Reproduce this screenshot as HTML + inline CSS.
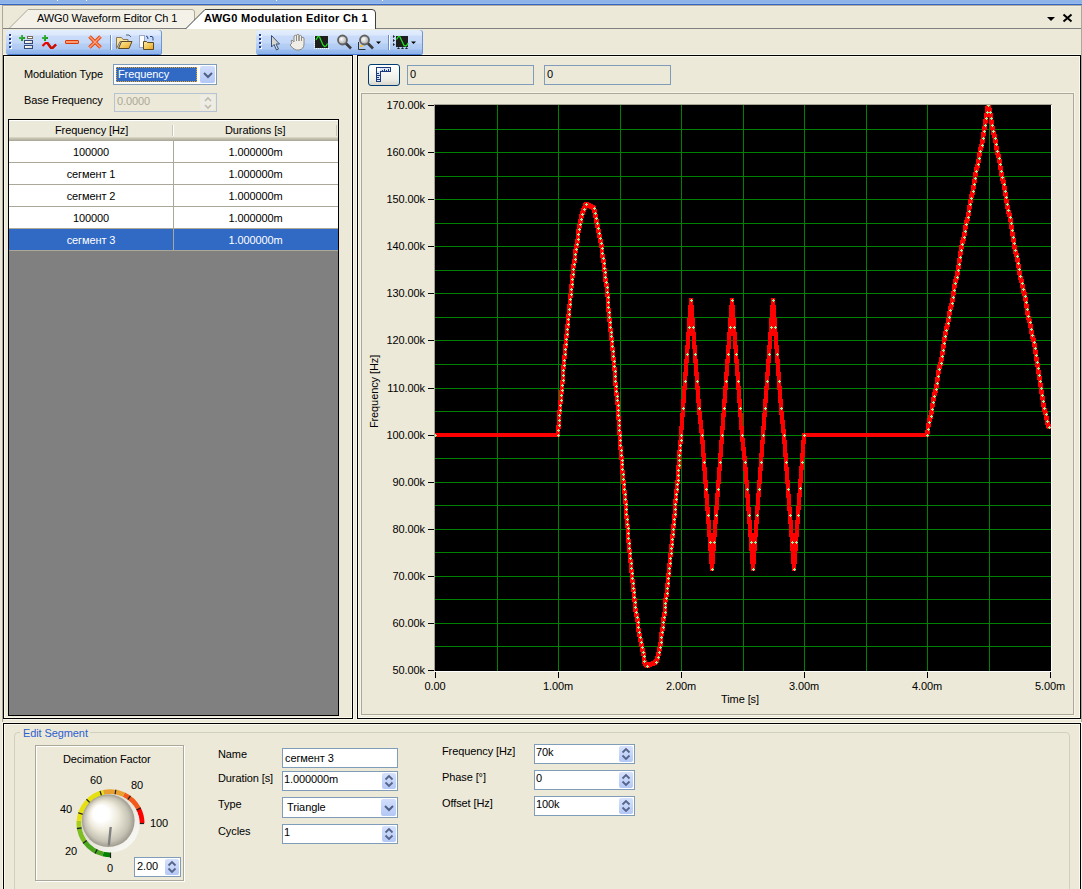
<!DOCTYPE html>
<html><head><meta charset="utf-8"><style>
html,body{margin:0;padding:0}
body{width:1082px;height:889px;overflow:hidden;position:relative;background:#ECE9D8;font-family:"Liberation Sans",sans-serif;font-size:11px;color:#000}
.t{position:absolute;white-space:nowrap;line-height:13px;letter-spacing:-0.1px;margin-left:-1px}
</style></head><body>
<div style="position:absolute;left:0px;top:0px;width:1082px;height:3px;background:#8EB3E8"></div><div style="position:absolute;left:0px;top:3px;width:1082px;height:1px;background:#97B9EB"></div><div style="position:absolute;left:0px;top:4px;width:1082px;height:1px;background:#3366C6"></div><div style="position:absolute;left:3px;top:6px;width:1078px;height:1px;background:#F2F0E4"></div><div style="position:absolute;left:57px;top:0px;width:1px;height:1px;background:#FFFFF0"></div><div style="position:absolute;left:86px;top:0px;width:1px;height:1px;background:#FFFFF0"></div><div style="position:absolute;left:276px;top:0px;width:1px;height:1px;background:#FFFFF0"></div><div style="position:absolute;left:382px;top:0px;width:1px;height:1px;background:#FFFFF0"></div><div style="position:absolute;left:2px;top:5px;width:1080px;height:1px;background:#B0AB98"></div><div style="position:absolute;left:2px;top:5px;width:1px;height:884px;background:#ACA899"></div><div style="position:absolute;left:1081px;top:5px;width:1px;height:884px;background:#ACA899"></div><div style="position:absolute;left:3px;top:55px;width:350px;height:664px;box-sizing:border-box;border:1px solid #000;box-shadow:inset 0 0 0 1px #FBF8EC, 0 0 0 1px #F8F6EA"></div><div style="position:absolute;left:357px;top:55px;width:724px;height:664px;box-sizing:border-box;border:1px solid #000;box-shadow:inset 0 0 0 1px #FBF8EC, 0 0 0 1px #F8F6EA"></div><div style="position:absolute;left:1081px;top:5px;width:1px;height:884px;background:#ACA899"></div><div style="position:absolute;left:2px;top:5px;width:1px;height:884px;background:#ACA899"></div><div style="position:absolute;left:3px;top:723px;width:1078px;height:170px;box-sizing:border-box;border:1px solid #000;border-bottom:none;box-shadow:inset 0 0 0 1px #FBF8EC, 0 0 0 1px #F8F6EA"></div><svg width="1082" height="30" style="position:absolute;left:0;top:0">
<path d="M9 28.5 L28 9.5 H192 Q194.5 9.5 194.5 12 V28.5" fill="#F4F2E8" stroke="#ACA899" stroke-width="1"/>
<path d="M3 28.5 H186 M375 28.5 H1081" stroke="#808080" stroke-width="1" fill="none"/>
<path d="M185.5 29 L205 9.5 H372 Q375.5 9.5 375.5 13 V29" fill="#FFFFFF" stroke="#404040" stroke-width="1"/>
<path d="M1047 17 h8 l-4 4 z" fill="#000"/>
<path d="M1063.5 14.5 L1071.5 21.5 M1071.5 14.5 L1063.5 21.5" stroke="#000" stroke-width="2"/>
</svg><div class="t" style="left:38px;top:12px;">AWG0 Waveform Editor Ch 1</div><div class="t" style="left:205px;top:12px;font-weight:bold;letter-spacing:0.3px">AWG0 Modulation Editor Ch 1</div><div style="position:absolute;left:6px;top:30px;width:156px;height:25px;background:linear-gradient(to bottom,#E3EEFD 0px,#DCE9FC 5px,#CADCF9 6px,#C4D8F8 13px,#B6CFF5 14px,#AFCAF3 19px,#9BBDEE 20px,#8DB3EA 24px,#4A7CD4 24px);border-radius:3px 3px 3px 3px;box-shadow:inset -1px 0 0 #6A93D8"></div><div style="position:absolute;left:256px;top:30px;width:167px;height:25px;background:linear-gradient(to bottom,#E3EEFD 0px,#DCE9FC 5px,#CADCF9 6px,#C4D8F8 13px,#B6CFF5 14px,#AFCAF3 19px,#9BBDEE 20px,#8DB3EA 24px,#4A7CD4 24px);border-radius:3px 3px 3px 3px;box-shadow:inset -1px 0 0 #6A93D8"></div><div style="position:absolute;left:10px;top:35px;width:2px;height:2px;background:#FFFFFF"></div><div style="position:absolute;left:9px;top:34px;width:2px;height:2px;background:#1F3F8F"></div><div style="position:absolute;left:10px;top:39px;width:2px;height:2px;background:#FFFFFF"></div><div style="position:absolute;left:9px;top:38px;width:2px;height:2px;background:#1F3F8F"></div><div style="position:absolute;left:10px;top:43px;width:2px;height:2px;background:#FFFFFF"></div><div style="position:absolute;left:9px;top:42px;width:2px;height:2px;background:#1F3F8F"></div><div style="position:absolute;left:10px;top:47px;width:2px;height:2px;background:#FFFFFF"></div><div style="position:absolute;left:9px;top:46px;width:2px;height:2px;background:#1F3F8F"></div><div style="position:absolute;left:260px;top:35px;width:2px;height:2px;background:#FFFFFF"></div><div style="position:absolute;left:259px;top:34px;width:2px;height:2px;background:#1F3F8F"></div><div style="position:absolute;left:260px;top:39px;width:2px;height:2px;background:#FFFFFF"></div><div style="position:absolute;left:259px;top:38px;width:2px;height:2px;background:#1F3F8F"></div><div style="position:absolute;left:260px;top:43px;width:2px;height:2px;background:#FFFFFF"></div><div style="position:absolute;left:259px;top:42px;width:2px;height:2px;background:#1F3F8F"></div><div style="position:absolute;left:260px;top:47px;width:2px;height:2px;background:#FFFFFF"></div><div style="position:absolute;left:259px;top:46px;width:2px;height:2px;background:#1F3F8F"></div><svg width="430" height="60" style="position:absolute;left:0;top:0">
<!-- add list -->
<defs><linearGradient id="gp" x1="0" y1="0" x2="1" y2="1"><stop offset="0" stop-color="#5CC45C"/><stop offset="1" stop-color="#008A00"/></linearGradient>
<linearGradient id="bar" x1="0" y1="0" x2="1" y2="1"><stop offset="0" stop-color="#FFFFFF"/><stop offset="0.5" stop-color="#F4F0E0"/><stop offset="1" stop-color="#B8CCF0"/></linearGradient>
<radialGradient id="lens" cx="0.4" cy="0.4" r="0.6"><stop offset="0" stop-color="#FFFFFF"/><stop offset="1" stop-color="#A8A8A8"/></radialGradient>
<linearGradient id="fold" x1="0" y1="0" x2="1" y2="1"><stop offset="0" stop-color="#FCEAA8"/><stop offset="0.6" stop-color="#F2C450"/><stop offset="1" stop-color="#E8A020"/></linearGradient></defs>
<path d="M21 35h2v2h2v2h-2v2h-2v-2h-2v-2h2z" fill="url(#gp)"/>
<path d="M19 37h6v2h-6z M21 35h2v6h-2z" fill="url(#gp)"/>
<rect x="27.5" y="36.5" width="5" height="2" fill="#FFFFFF" stroke="#7A6E58"/>
<rect x="24.5" y="40.5" width="8" height="3" fill="url(#bar)" stroke="#34497A"/>
<rect x="24.5" y="45.5" width="8" height="3" fill="url(#bar)" stroke="#34497A"/>
<!-- add wave -->
<path d="M42 37h6v2h-6z M44 35h2v6h-2z" fill="url(#gp)"/>
<path d="M42.5 46 L45.5 43 L47.5 43 L51 48 L52.5 48 L56 44.5" stroke="#F00000" stroke-width="2.2" fill="none"/>
<path d="M47.5 43 L51 48 L52.5 48 L56 44.5" stroke="#C81000" stroke-width="2.2" fill="none"/>
<!-- minus -->
<rect x="65.5" y="40.5" width="13" height="3" rx="0.5" fill="#FF9A70" stroke="#D83A08"/>
<!-- X -->
<path d="M89.5 36.5 L100.5 47.5 M100.5 36.5 L89.5 47.5" stroke="#E84A10" stroke-width="3.6"/>
<path d="M89.5 36.5 L100.5 47.5 M100.5 36.5 L89.5 47.5" stroke="#FFA080" stroke-width="1.4"/>
<!-- sep -->
<rect x="110" y="35" width="1" height="15" fill="#6A8CCB"/><rect x="111" y="35" width="1" height="15" fill="#fff"/>
<!-- open folder -->
<path d="M116.5 37.5 h5 l1.5 2 h5 v2 h-8 l-3.5 7 z" fill="#FBE49A" stroke="#8A7A5A"/>
<path d="M118.5 48.5 l3 -7 h10.5 l-3 7 z" fill="url(#fold)" stroke="#5A4A2A"/>
<path d="M126 35 h3 l2 2" stroke="#52607A" fill="none"/>
<!-- save -->
<rect x="139.5" y="35.5" width="5" height="12" fill="#fff" stroke="#9AA8C8"/>
<path d="M143.5 41.5 h3 l1 1 h6 v7 h-10 z" fill="url(#fold)" stroke="#5A4A2A"/>
<path d="M146 36 q2 0 2 3 M150 36.5 h2 q1 0 1 2 v2" stroke="#24408A" fill="none"/>
<!-- arrow -->
<path d="M271.5 35.5 L271.5 47 L274 44.5 L276.5 50 L278.5 49 L276 44 L279.5 44 Z" fill="#D8D8D0" stroke="#38507A"/>
<!-- hand -->
<path d="M292 43 q-2 -3 0 -3 l2 2 v-6 q1.5 -1.5 2.5 0 v5 v-6 q1.5 -1.5 2.5 0 v6 v-5 q1.5 -1.5 2.5 0 v5 v-3 q1.5 -1.5 2.5 0 v6 q0 5 -5 6 h-3 q-3 -1 -6 -5 z" fill="#EFEDE6" stroke="#8A8A86"/>
<!-- chart icon -->
<rect x="315" y="36" width="13" height="12" fill="#1E1E1E"/>
<path d="M316 40 L318 36.5 L319.5 37 L323 45 L324.5 46.5 L326 46 L327.5 43.5" stroke="#22E022" stroke-width="1.3" fill="none"/>
<path d="M314.5 36 v12.5 h14.5" stroke="#fff" stroke-dasharray="1 1" fill="none"/>
<!-- magnifier 1 -->
<circle cx="342.5" cy="40" r="4.5" fill="url(#lens)" stroke="#626262" stroke-width="1.8"/>
<path d="M346 43.5 L351 48.5" stroke="#3C3C3C" stroke-width="2.6"/>
<!-- magnifier 2 -->
<circle cx="364.5" cy="40" r="4.5" fill="url(#lens)" stroke="#626262" stroke-width="1.8"/>
<path d="M368 43.5 L373 48.5" stroke="#3C3C3C" stroke-width="2.6"/>
<path d="M358.5 42 v7.5 h7" stroke="#303030" fill="none"/>
<rect x="360" y="45" width="3" height="2" fill="#F0C040"/>
<path d="M376 41.5 h5 l-2.5 2.5 z" fill="#000"/>
<!-- sep2 -->
<rect x="388" y="35" width="1" height="15" fill="#6A8CCB"/><rect x="389" y="35" width="1" height="15" fill="#fff"/>
<!-- chart icon 2 -->
<rect x="396" y="36" width="12" height="11" fill="#1E1E1E"/>
<path d="M396.5 39.5 L398.5 36.5 L400 37 L404 45.5 L405.5 46 L407 45 L408 43" stroke="#22E022" stroke-width="1.3" fill="none"/>
<path d="M393 35 l2 1.5 l-2 1.5z M393 39 l2 1.5 l-2 1.5z M393 43 l2 1.5 l-2 1.5z M397 49 l1.5 -2 l1.5 2z M401 49 l1.5 -2 l1.5 2z M405 49 l1.5 -2 l1.5 2z" fill="#202020"/>
<path d="M411 41.5 h5 l-2.5 2.5 z" fill="#000"/>
</svg><div class="t" style="left:25px;top:68px;">Modulation Type</div><div style="position:absolute;left:113px;top:64px;width:104px;height:21px;box-sizing:border-box;border:1px solid #7F9DB9;background:#fff"></div><div style="position:absolute;left:116px;top:67px;width:81px;height:15px;background:#316AC5;box-sizing:border-box;border:1px dotted #E8A020"></div><div class="t" style="left:119px;top:68px;color:#fff">Frequency</div><div style="position:absolute;left:200px;top:66px;width:15px;height:17px;background:linear-gradient(#D2DEFB,#B4C8F6);border-radius:2px"></div><svg width="12" height="8" style="position:absolute;left:202px;top:71px"><path d="M2 2 L6 6 L10 2" stroke="#4D6185" stroke-width="2" fill="none"/></svg><div class="t" style="left:25px;top:94px;">Base Frequency</div><div style="position:absolute;left:114px;top:93px;width:103px;height:19px;box-sizing:border-box;border:1px solid #B5C3D5;background:#ECE9D8"></div><div class="t" style="left:118px;top:95px;color:#ACA899">0.0000</div><div style="position:absolute;left:200px;top:95px;width:15px;height:15px;background:#EEEDE5;border-radius:2px"></div><svg width="12" height="16" style="position:absolute;left:202px;top:95px"><path d="M3 6 L6 3 L9 6 M3 10 L6 13 L9 10" stroke="#C0BCAC" stroke-width="1.6" fill="none"/></svg><div style="position:absolute;left:8px;top:119px;width:331px;height:597px;box-sizing:border-box;border:1px solid #000;background:#808080"></div><div style="position:absolute;left:9px;top:120px;width:329px;height:1px;background:#FFFFFF"></div><div style="position:absolute;left:9px;top:121px;width:329px;height:16px;background:#EBE9DA"></div><div style="position:absolute;left:9px;top:137px;width:329px;height:4px;background:linear-gradient(#DEDBCB,#C9C5B5,#B9B5A5,#A9A595)"></div><div style="position:absolute;left:172px;top:125px;width:1px;height:11px;background:#CBC7B8"></div><div style="position:absolute;left:173px;top:125px;width:1px;height:11px;background:#FFFFFF"></div><div style="position:absolute;left:336px;top:125px;width:1px;height:11px;background:#CBC7B8"></div><div class="t" style="left:56px;top:124px;">Frequency [Hz]</div><div class="t" style="left:226px;top:124px;">Durations [s]</div><div style="position:absolute;left:9px;top:141px;width:329px;height:21px;background:#FFFFFF"></div><div style="position:absolute;left:9px;top:162px;width:329px;height:1px;background:#ACA899"></div><div style="position:absolute;left:173px;top:141px;width:1px;height:21px;background:#ACA899"></div><div class="t" style="left:9px;width:164px;text-align:center;top:146px;color:#000;margin-left:0">100000</div><div class="t" style="left:174px;width:163px;text-align:center;top:146px;color:#000;margin-left:0">1.000000m</div><div style="position:absolute;left:9px;top:163px;width:329px;height:21px;background:#FFFFFF"></div><div style="position:absolute;left:9px;top:184px;width:329px;height:1px;background:#ACA899"></div><div style="position:absolute;left:173px;top:163px;width:1px;height:21px;background:#ACA899"></div><div class="t" style="left:9px;width:164px;text-align:center;top:168px;color:#000;margin-left:0">сегмент 1</div><div class="t" style="left:174px;width:163px;text-align:center;top:168px;color:#000;margin-left:0">1.000000m</div><div style="position:absolute;left:9px;top:185px;width:329px;height:21px;background:#FFFFFF"></div><div style="position:absolute;left:9px;top:206px;width:329px;height:1px;background:#ACA899"></div><div style="position:absolute;left:173px;top:185px;width:1px;height:21px;background:#ACA899"></div><div class="t" style="left:9px;width:164px;text-align:center;top:190px;color:#000;margin-left:0">сегмент 2</div><div class="t" style="left:174px;width:163px;text-align:center;top:190px;color:#000;margin-left:0">1.000000m</div><div style="position:absolute;left:9px;top:207px;width:329px;height:21px;background:#FFFFFF"></div><div style="position:absolute;left:9px;top:228px;width:329px;height:1px;background:#ACA899"></div><div style="position:absolute;left:173px;top:207px;width:1px;height:21px;background:#ACA899"></div><div class="t" style="left:9px;width:164px;text-align:center;top:212px;color:#000;margin-left:0">100000</div><div class="t" style="left:174px;width:163px;text-align:center;top:212px;color:#000;margin-left:0">1.000000m</div><div style="position:absolute;left:9px;top:229px;width:329px;height:21px;background:#316AC5"></div><div style="position:absolute;left:9px;top:250px;width:329px;height:1px;background:#ACA899"></div><div style="position:absolute;left:173px;top:229px;width:1px;height:21px;background:#ACA899"></div><div class="t" style="left:9px;width:164px;text-align:center;top:234px;color:#FFFFFF;margin-left:0">сегмент 3</div><div class="t" style="left:174px;width:163px;text-align:center;top:234px;color:#FFFFFF;margin-left:0">1.000000m</div><div style="position:absolute;left:368px;top:64px;width:32px;height:22px;box-sizing:border-box;border:1px solid #003C74;border-radius:3px;background:linear-gradient(#FFFFFF,#F0F0EA 70%,#D8D6CC)"></div><svg width="16" height="16" style="position:absolute;left:376px;top:67px" shape-rendering="crispEdges">
<path d="M0.5 0.5 h14 v4 h-10 v10 h-4 z" fill="#DCE6F8" stroke="#1C3A7A"/>
<rect x="1" y="1" width="3" height="3" fill="#fff"/>
<path d="M6.5 3v1.5M8.5 2v2.5M10.5 3v1.5M12.5 2v2.5M1 6.5h1.5M1 8.5h2.5M1 10.5h1.5M1 12.5h2.5" stroke="#1C3A7A"/>
</svg><div style="position:absolute;left:407px;top:65px;width:127px;height:20px;box-sizing:border-box;border:1px solid #7F9DB9;background:#ECE9D8"></div><div style="position:absolute;left:544px;top:65px;width:127px;height:20px;box-sizing:border-box;border:1px solid #7F9DB9;background:#ECE9D8"></div><div class="t" style="left:411px;top:68px;">0</div><div class="t" style="left:548px;top:68px;">0</div><div style="position:absolute;left:361px;top:93px;width:713px;height:622px;box-sizing:border-box;border:1px solid #ACA899;box-shadow:0 0 0 1px #F6F4E8"></div><svg width="617" height="567" style="position:absolute;left:435px;top:105px" shape-rendering="crispEdges">
<rect x="0" y="0" width="616" height="566" fill="#000"/>
<rect x="616" y="0" width="1" height="567" fill="#fff"/>
<rect x="0" y="566" width="617" height="1" fill="#fff"/>
<rect x="62" y="0" width="1" height="566" fill="#008000"/>
<rect x="123" y="0" width="1" height="566" fill="#008000"/>
<rect x="185" y="0" width="1" height="566" fill="#008000"/>
<rect x="246" y="0" width="1" height="566" fill="#008000"/>
<rect x="308" y="0" width="1" height="566" fill="#008000"/>
<rect x="369" y="0" width="1" height="566" fill="#008000"/>
<rect x="431" y="0" width="1" height="566" fill="#008000"/>
<rect x="492" y="0" width="1" height="566" fill="#008000"/>
<rect x="554" y="0" width="1" height="566" fill="#008000"/>
<rect x="0" y="24" width="616" height="1" fill="#008000"/>
<rect x="0" y="47" width="616" height="1" fill="#008000"/>
<rect x="0" y="71" width="616" height="1" fill="#008000"/>
<rect x="0" y="94" width="616" height="1" fill="#008000"/>
<rect x="0" y="118" width="616" height="1" fill="#008000"/>
<rect x="0" y="141" width="616" height="1" fill="#008000"/>
<rect x="0" y="165" width="616" height="1" fill="#008000"/>
<rect x="0" y="188" width="616" height="1" fill="#008000"/>
<rect x="0" y="212" width="616" height="1" fill="#008000"/>
<rect x="0" y="235" width="616" height="1" fill="#008000"/>
<rect x="0" y="259" width="616" height="1" fill="#008000"/>
<rect x="0" y="283" width="616" height="1" fill="#008000"/>
<rect x="0" y="306" width="616" height="1" fill="#008000"/>
<rect x="0" y="330" width="616" height="1" fill="#008000"/>
<rect x="0" y="353" width="616" height="1" fill="#008000"/>
<rect x="0" y="377" width="616" height="1" fill="#008000"/>
<rect x="0" y="400" width="616" height="1" fill="#008000"/>
<rect x="0" y="424" width="616" height="1" fill="#008000"/>
<rect x="0" y="447" width="616" height="1" fill="#008000"/>
<rect x="0" y="471" width="616" height="1" fill="#008000"/>
<rect x="0" y="494" width="616" height="1" fill="#008000"/>
<rect x="0" y="518" width="616" height="1" fill="#008000"/>
<rect x="0" y="541" width="616" height="1" fill="#008000"/>
<path d="M-2,328L125,328L125,332L-2,332ZM121,323L125,323L125,332L121,332ZM121,323L122,318L126,318L126,322L125,327L121,327ZM122,313L126,313L126,322L122,322ZM122,308L126,308L126,317L122,317ZM122,308L123,303L127,303L127,307L126,312L122,312ZM123,298L127,298L127,307L123,307ZM123,298L124,293L128,293L128,297L127,302L123,302ZM124,288L128,288L128,297L124,297ZM124,288L125,283L129,283L129,287L128,292L124,292ZM125,278L129,278L129,287L125,287ZM125,278L126,273L130,273L130,277L129,282L125,282ZM126,268L130,268L130,277L126,277ZM126,263L130,263L130,272L126,272ZM126,263L127,258L131,258L131,262L130,267L126,267ZM127,253L131,253L131,262L127,262ZM127,253L128,247L132,247L132,251L131,257L127,257ZM128,242L132,242L132,251L128,251ZM128,242L129,237L133,237L133,241L132,246L128,246ZM129,232L133,232L133,241L129,241ZM129,232L130,227L134,227L134,231L133,236L129,236ZM130,222L134,222L134,231L130,231ZM130,222L131,217L135,217L135,221L134,226L130,226ZM131,212L135,212L135,221L131,221ZM131,212L132,207L136,207L136,211L135,216L131,216ZM132,202L136,202L136,211L132,211ZM132,202L133,197L137,197L137,201L136,206L132,206ZM133,192L137,192L137,201L133,201ZM133,192L134,187L138,187L138,191L137,196L133,196ZM134,182L138,182L138,191L134,191ZM134,182L135,177L139,177L139,181L138,186L134,186ZM135,172L139,172L139,181L135,181ZM135,172L136,167L140,167L140,171L139,176L135,176ZM136,162L140,162L140,171L136,171ZM136,162L137,157L141,157L141,161L140,166L136,166ZM137,157L138,152L142,152L142,156L141,161L137,161ZM138,147L142,147L142,156L138,156ZM138,147L139,142L143,142L143,146L142,151L138,151ZM139,142L140,137L144,137L144,141L143,146L139,146ZM140,137L141,132L145,132L145,136L144,141L140,141ZM141,127L145,127L145,136L141,136ZM141,127L142,122L146,122L146,126L145,131L141,131ZM142,122L143,117L147,117L147,121L146,126L142,126ZM143,117L144,112L148,112L148,116L147,121L143,121ZM144,112L145,107L149,107L149,111L148,116L144,116ZM145,107L147,102L151,102L151,106L149,111L145,111ZM147,102L149,97L153,97L153,101L151,106L147,106ZM149,97L153,97L161,101L161,105L157,105L149,101ZM157,101L161,101L162,106L162,110L158,110L157,105ZM158,106L162,106L163,111L163,115L159,115L158,110ZM159,111L163,111L164,116L164,120L160,120L159,115ZM160,116L164,116L165,121L165,125L161,125L160,120ZM161,121L165,121L166,126L166,130L162,130L161,125ZM162,126L166,126L167,131L167,135L163,135L162,130ZM163,131L167,131L168,136L168,140L164,140L163,135ZM164,136L168,136L169,141L169,145L165,145L164,140ZM165,141L169,141L169,150L165,150ZM165,146L169,146L170,151L170,155L166,155L165,150ZM166,151L170,151L171,156L171,160L167,160L166,155ZM167,156L171,156L171,165L167,165ZM167,161L171,161L172,165L172,169L168,169L167,165ZM168,165L172,165L172,174L168,174ZM168,170L172,170L173,175L173,179L169,179L168,174ZM169,175L173,175L174,180L174,184L170,184L169,179ZM170,180L174,180L174,189L170,189ZM170,185L174,185L175,190L175,194L171,194L170,189ZM171,190L175,190L175,199L171,199ZM171,195L175,195L175,204L171,204ZM171,200L175,200L176,205L176,209L172,209L171,204ZM172,205L176,205L176,214L172,214ZM172,210L176,210L177,215L177,219L173,219L172,214ZM173,215L177,215L177,224L173,224ZM173,220L177,220L178,225L178,229L174,229L173,224ZM174,225L178,225L178,233L174,233ZM174,229L178,229L179,234L179,238L175,238L174,233ZM175,234L179,234L179,243L175,243ZM175,239L179,239L180,244L180,248L176,248L175,243ZM176,244L180,244L180,253L176,253ZM176,249L180,249L181,254L181,258L177,258L176,253ZM177,254L181,254L181,263L177,263ZM177,259L181,259L182,264L182,268L178,268L177,263ZM178,264L182,264L182,273L178,273ZM178,269L182,269L182,278L178,278ZM178,274L182,274L183,279L183,283L179,283L178,278ZM179,279L183,279L183,288L179,288ZM179,284L183,284L184,289L184,293L180,293L179,288ZM180,289L184,289L184,297L180,297ZM180,293L184,293L185,298L185,302L181,302L180,297ZM181,298L185,298L185,307L181,307ZM181,303L185,303L185,312L181,312ZM181,308L185,308L186,313L186,317L182,317L181,312ZM182,313L186,313L186,322L182,322ZM182,318L186,318L186,327L182,327ZM182,323L186,323L187,328L187,332L183,332L182,327ZM183,328L187,328L187,337L183,337ZM183,333L187,333L187,342L183,342ZM183,338L187,338L188,343L188,347L184,347L183,342ZM184,343L188,343L188,352L184,352ZM184,348L188,348L189,353L189,357L185,357L184,352ZM185,353L189,353L189,361L185,361ZM185,357L189,357L189,366L185,366ZM185,362L189,362L190,367L190,371L186,371L185,366ZM186,367L190,367L190,376L186,376ZM186,372L190,372L191,377L191,381L187,381L186,376ZM187,377L191,377L191,386L187,386ZM187,382L191,382L192,387L192,391L188,391L187,386ZM188,387L192,387L192,396L188,396ZM188,392L192,392L193,397L193,401L189,401L188,396ZM189,397L193,397L193,406L189,406ZM189,402L193,402L193,411L189,411ZM189,407L193,407L194,412L194,416L190,416L189,411ZM190,412L194,412L194,421L190,421ZM190,417L194,417L195,421L195,425L191,425L190,421ZM191,421L195,421L195,430L191,430ZM191,426L195,426L195,435L191,435ZM191,431L195,431L196,436L196,440L192,440L191,435ZM192,436L196,436L196,445L192,445ZM192,441L196,441L197,446L197,450L193,450L192,445ZM193,446L197,446L197,455L193,455ZM193,451L197,451L198,456L198,460L194,460L193,455ZM194,456L198,456L198,465L194,465ZM194,461L198,461L199,466L199,470L195,470L194,465ZM195,466L199,466L199,475L195,475ZM195,471L199,471L200,476L200,480L196,480L195,475ZM196,476L200,476L200,485L196,485ZM196,481L200,481L201,485L201,489L197,489L196,485ZM197,485L201,485L201,494L197,494ZM197,490L201,490L202,495L202,499L198,499L197,494ZM198,495L202,495L202,504L198,504ZM198,500L202,500L203,505L203,509L199,509L198,504ZM199,505L203,505L204,510L204,514L200,514L199,509ZM200,510L204,510L205,515L205,519L201,519L200,514ZM201,515L205,515L205,524L201,524ZM201,520L205,520L206,525L206,529L202,529L201,524ZM202,525L206,525L207,530L207,534L203,534L202,529ZM203,530L207,530L208,535L208,539L204,539L203,534ZM204,535L208,535L209,540L209,544L205,544L204,539ZM205,540L209,540L210,545L210,549L206,549L205,544ZM206,545L210,545L211,549L211,553L207,553L206,549ZM207,549L211,549L211,558L207,558ZM207,554L211,554L214,559L214,563L210,563L207,558ZM210,559L219,555L223,555L223,559L214,563L210,563ZM219,555L221,550L225,550L225,554L223,559L219,559ZM221,550L222,545L226,545L226,549L225,554L221,554ZM222,545L223,540L227,540L227,544L226,549L222,549ZM223,540L224,535L228,535L228,539L227,544L223,544ZM224,530L228,530L228,539L224,539ZM224,530L225,525L229,525L229,529L228,534L224,534ZM225,525L226,520L230,520L230,524L229,529L225,529ZM226,515L230,515L230,524L226,524ZM226,515L227,510L231,510L231,514L230,519L226,519ZM227,510L228,505L232,505L232,509L231,514L227,514ZM228,500L232,500L232,509L228,509ZM228,496L232,496L232,504L228,504ZM228,496L229,491L233,491L233,495L232,500L228,500ZM229,491L230,486L234,486L234,490L233,495L229,495ZM230,481L234,481L234,490L230,490ZM230,481L231,476L235,476L235,480L234,485L230,485ZM231,471L235,471L235,480L231,480ZM231,471L232,466L236,466L236,470L235,475L231,475ZM232,461L236,461L236,470L232,470ZM232,461L233,456L237,456L237,460L236,465L232,465ZM233,451L237,451L237,460L233,460ZM233,451L234,446L238,446L238,450L237,455L233,455ZM234,441L238,441L238,450L234,450ZM234,441L235,437L239,437L239,441L238,445L234,445ZM235,432L239,432L239,441L235,441ZM235,432L236,427L240,427L240,431L239,436L235,436ZM236,422L240,422L240,431L236,431ZM236,422L237,417L241,417L241,421L240,426L236,426ZM237,412L241,412L241,421L237,421ZM237,412L238,407L242,407L242,411L241,416L237,416ZM238,402L242,402L242,411L238,411ZM238,397L242,397L242,406L238,406ZM238,397L239,392L243,392L243,396L242,401L238,401ZM239,387L243,387L243,396L239,396ZM239,387L240,382L244,382L244,386L243,391L239,391ZM240,377L244,377L244,386L240,386ZM240,377L241,373L245,373L245,377L244,381L240,381ZM241,368L245,368L245,377L241,377ZM241,363L245,363L245,372L241,372ZM241,363L242,358L246,358L246,362L245,367L241,367ZM242,353L246,353L246,362L242,362ZM242,348L246,348L246,357L242,357ZM242,348L243,343L247,343L247,347L246,352L242,352ZM243,338L247,338L247,347L243,347ZM243,338L244,333L248,333L248,337L247,342L243,342ZM244,328L248,328L248,337L244,337ZM244,328L246,301L250,301L250,305L248,332L244,332ZM246,301L248,274L252,274L252,278L250,305L246,305ZM248,274L250,247L254,247L254,251L252,278L248,278ZM250,247L252,220L256,220L256,224L254,251L250,251ZM252,220L254,193L258,193L258,197L256,224L252,224ZM254,193L258,193L260,220L260,224L256,224L254,197ZM256,220L260,220L262,247L262,251L258,251L256,224ZM258,247L262,247L264,274L264,278L260,278L258,251ZM260,274L264,274L266,301L266,305L262,305L260,278ZM262,301L266,301L269,328L269,332L265,332L262,305ZM265,328L269,328L271,355L271,359L267,359L265,332ZM267,355L271,355L273,382L273,386L269,386L267,359ZM269,382L273,382L275,408L275,412L271,412L269,386ZM271,408L275,408L277,435L277,439L273,439L271,412ZM273,435L277,435L279,462L279,466L275,466L273,439ZM275,462L277,435L281,435L281,439L279,466L275,466ZM277,435L279,408L283,408L283,412L281,439L277,439ZM279,408L281,382L285,382L285,386L283,412L279,412ZM281,382L283,355L287,355L287,359L285,386L281,386ZM283,355L285,328L289,328L289,332L287,359L283,359ZM285,328L287,301L291,301L291,305L289,332L285,332ZM287,301L289,274L293,274L293,278L291,305L287,305ZM289,274L291,247L295,247L295,251L293,278L289,278ZM291,247L293,220L297,220L297,224L295,251L291,251ZM293,220L295,193L299,193L299,197L297,224L293,224ZM295,193L299,193L301,220L301,224L297,224L295,197ZM297,220L301,220L303,247L303,251L299,251L297,224ZM299,247L303,247L305,274L305,278L301,278L299,251ZM301,274L305,274L307,301L307,305L303,305L301,278ZM303,301L307,301L309,328L309,332L305,332L303,305ZM305,328L309,328L312,355L312,359L308,359L305,332ZM308,355L312,355L314,382L314,386L310,386L308,359ZM310,382L314,382L316,408L316,412L312,412L310,386ZM312,408L316,408L318,435L318,439L314,439L312,412ZM314,435L318,435L320,462L320,466L316,466L314,439ZM316,462L318,435L322,435L322,439L320,466L316,466ZM318,435L320,408L324,408L324,412L322,439L318,439ZM320,408L322,382L326,382L326,386L324,412L320,412ZM322,382L324,355L328,355L328,359L326,386L322,386ZM324,355L326,328L330,328L330,332L328,359L324,359ZM326,328L328,301L332,301L332,305L330,332L326,332ZM328,301L330,274L334,274L334,278L332,305L328,305ZM330,274L332,247L336,247L336,251L334,278L330,278ZM332,247L334,220L338,220L338,224L336,251L332,251ZM334,220L336,193L340,193L340,197L338,224L334,224ZM336,193L340,193L342,220L342,224L338,224L336,197ZM338,220L342,220L344,247L344,251L340,251L338,224ZM340,247L344,247L346,274L346,278L342,278L340,251ZM342,274L346,274L348,301L348,305L344,305L342,278ZM344,301L348,301L351,328L351,332L347,332L344,305ZM347,328L351,328L353,355L353,359L349,359L347,332ZM349,355L353,355L355,382L355,386L351,386L349,359ZM351,382L355,382L357,408L357,412L353,412L351,386ZM353,408L357,408L359,435L359,439L355,439L353,412ZM355,435L359,435L361,462L361,466L357,466L355,439ZM357,462L359,435L363,435L363,439L361,466L357,466ZM359,435L361,408L365,408L365,412L363,439L359,439ZM361,408L363,381L367,381L367,385L365,412L361,412ZM363,381L365,355L369,355L369,359L367,385L363,385ZM365,355L367,328L371,328L371,332L369,359L365,359ZM367,328L494,328L494,332L367,332ZM490,328L491,322L495,322L495,326L494,332L490,332ZM491,322L492,315L496,315L496,319L495,326L491,326ZM492,315L494,309L498,309L498,313L496,319L492,319ZM494,309L495,302L499,302L499,306L498,313L494,313ZM495,302L496,295L500,295L500,299L499,306L495,306ZM496,295L497,289L501,289L501,293L500,299L496,299ZM497,289L499,282L503,282L503,286L501,293L497,293ZM499,282L500,276L504,276L504,280L503,286L499,286ZM500,276L501,269L505,269L505,273L504,280L500,280ZM501,269L502,262L506,262L506,266L505,273L501,273ZM502,262L504,256L508,256L508,260L506,266L502,266ZM504,256L505,249L509,249L509,253L508,260L504,260ZM505,249L506,243L510,243L510,247L509,253L505,253ZM506,243L507,236L511,236L511,240L510,247L506,247ZM507,236L508,229L512,229L512,233L511,240L507,240ZM508,229L509,223L513,223L513,227L512,233L508,233ZM509,223L511,216L515,216L515,220L513,227L509,227ZM511,216L512,210L516,210L516,214L515,220L511,220ZM512,210L513,203L517,203L517,207L516,214L512,214ZM513,203L515,196L519,196L519,200L517,207L513,207ZM515,196L516,190L520,190L520,194L519,200L515,200ZM516,190L517,183L521,183L521,187L520,194L516,194ZM517,183L518,176L522,176L522,180L521,187L517,187ZM518,176L520,170L524,170L524,174L522,180L518,180ZM520,170L521,163L525,163L525,167L524,174L520,174ZM521,163L522,157L526,157L526,161L525,167L521,167ZM522,157L523,150L527,150L527,154L526,161L522,161ZM523,150L524,143L528,143L528,147L527,154L523,154ZM524,143L525,137L529,137L529,141L528,147L524,147ZM525,137L527,130L531,130L531,134L529,141L525,141ZM527,130L528,124L532,124L532,128L531,134L527,134ZM528,124L529,117L533,117L533,121L532,128L528,128ZM529,117L531,110L535,110L535,114L533,121L529,121ZM531,110L532,104L536,104L536,108L535,114L531,114ZM532,104L533,97L537,97L537,101L536,108L532,108ZM533,97L534,91L538,91L538,95L537,101L533,101ZM534,91L536,84L540,84L540,88L538,95L534,95ZM536,84L537,77L541,77L541,81L540,88L536,88ZM537,77L538,71L542,71L542,75L541,81L537,81ZM538,71L539,64L543,64L543,68L542,75L538,75ZM539,64L541,57L545,57L545,61L543,68L539,68ZM541,57L542,51L546,51L546,55L545,61L541,61ZM542,51L543,44L547,44L547,48L546,55L542,55ZM543,44L545,38L549,38L549,42L547,48L543,48ZM545,38L546,31L550,31L550,35L549,42L545,42ZM546,31L547,24L551,24L551,28L550,35L546,35ZM547,24L548,18L552,18L552,22L551,28L547,28ZM548,18L549,11L553,11L553,15L552,22L548,22ZM549,11L550,5L554,5L554,9L553,15L549,15ZM550,5L551,-2L555,-2L555,2L554,9L550,9ZM551,-2L555,-2L557,5L557,9L553,9L551,2ZM553,5L557,5L558,11L558,15L554,15L553,9ZM554,11L558,11L559,18L559,22L555,22L554,15ZM555,18L559,18L560,24L560,28L556,28L555,22ZM556,24L560,24L562,31L562,35L558,35L556,28ZM558,31L562,31L563,37L563,41L559,41L558,35ZM559,37L563,37L564,44L564,48L560,48L559,41ZM560,44L564,44L566,51L566,55L562,55L560,48ZM562,51L566,51L567,57L567,61L563,61L562,55ZM563,57L567,57L568,64L568,68L564,68L563,61ZM564,64L568,64L569,70L569,74L565,74L564,68ZM565,70L569,70L571,77L571,81L567,81L565,74ZM567,77L571,77L572,84L572,88L568,88L567,81ZM568,84L572,84L573,90L573,94L569,94L568,88ZM569,90L573,90L574,97L574,101L570,101L569,94ZM570,97L574,97L575,103L575,107L571,107L570,101ZM571,103L575,103L577,110L577,114L573,114L571,107ZM573,110L577,110L578,116L578,120L574,120L573,114ZM574,116L578,116L579,123L579,127L575,127L574,120ZM575,123L579,123L580,130L580,134L576,134L575,127ZM576,130L580,130L581,136L581,140L577,140L576,134ZM577,136L581,136L582,143L582,147L578,147L577,140ZM578,143L582,143L584,149L584,153L580,153L578,147ZM580,149L584,149L585,156L585,160L581,160L580,153ZM581,156L585,156L586,162L586,166L582,166L581,160ZM582,162L586,162L587,169L587,173L583,173L582,166ZM583,169L587,169L589,176L589,180L585,180L583,173ZM585,176L589,176L590,182L590,186L586,186L585,180ZM586,182L590,182L592,189L592,193L588,193L586,186ZM588,189L592,189L593,195L593,199L589,199L588,193ZM589,195L593,195L594,202L594,206L590,206L589,199ZM590,202L594,202L595,209L595,213L591,213L590,206ZM591,209L595,209L597,215L597,219L593,219L591,213ZM593,215L597,215L598,222L598,226L594,226L593,219ZM594,222L598,222L599,228L599,232L595,232L594,226ZM595,228L599,228L601,235L601,239L597,239L595,232ZM597,235L601,235L602,241L602,245L598,245L597,239ZM598,241L602,241L603,248L603,252L599,252L598,245ZM599,248L603,248L604,255L604,259L600,259L599,252ZM600,255L604,255L605,261L605,265L601,265L600,259ZM601,261L605,261L606,268L606,272L602,272L601,265ZM602,268L606,268L607,274L607,278L603,278L602,272ZM603,274L607,274L608,281L608,285L604,285L603,278ZM604,281L608,281L609,288L609,292L605,292L604,285ZM605,288L609,288L610,294L610,298L606,298L605,292ZM606,294L610,294L611,301L611,305L607,305L606,298ZM607,301L611,301L613,307L613,311L609,311L607,305ZM609,307L613,307L614,314L614,318L610,318L609,311ZM610,314L614,314L616,320L616,324L612,324L610,318Z" fill="#ff0000" shape-rendering="crispEdges"/>
<rect x="-1" y="330" width="3" height="1" fill="#9EF09E"/><rect x="0" y="329" width="1" height="3" fill="#9EF09E"/>
<rect x="122" y="330" width="3" height="1" fill="#9EF09E"/><rect x="123" y="329" width="1" height="3" fill="#9EF09E"/>
<rect x="122" y="325" width="3" height="1" fill="#9EF09E"/><rect x="123" y="324" width="1" height="3" fill="#9EF09E"/>
<rect x="123" y="320" width="3" height="1" fill="#9EF09E"/><rect x="124" y="319" width="1" height="3" fill="#9EF09E"/>
<rect x="123" y="315" width="3" height="1" fill="#9EF09E"/><rect x="124" y="314" width="1" height="3" fill="#9EF09E"/>
<rect x="123" y="310" width="3" height="1" fill="#9EF09E"/><rect x="124" y="309" width="1" height="3" fill="#9EF09E"/>
<rect x="124" y="305" width="3" height="1" fill="#9EF09E"/><rect x="125" y="304" width="1" height="3" fill="#9EF09E"/>
<rect x="124" y="300" width="3" height="1" fill="#9EF09E"/><rect x="125" y="299" width="1" height="3" fill="#9EF09E"/>
<rect x="125" y="295" width="3" height="1" fill="#9EF09E"/><rect x="126" y="294" width="1" height="3" fill="#9EF09E"/>
<rect x="125" y="290" width="3" height="1" fill="#9EF09E"/><rect x="126" y="289" width="1" height="3" fill="#9EF09E"/>
<rect x="126" y="285" width="3" height="1" fill="#9EF09E"/><rect x="127" y="284" width="1" height="3" fill="#9EF09E"/>
<rect x="126" y="280" width="3" height="1" fill="#9EF09E"/><rect x="127" y="279" width="1" height="3" fill="#9EF09E"/>
<rect x="127" y="275" width="3" height="1" fill="#9EF09E"/><rect x="128" y="274" width="1" height="3" fill="#9EF09E"/>
<rect x="127" y="270" width="3" height="1" fill="#9EF09E"/><rect x="128" y="269" width="1" height="3" fill="#9EF09E"/>
<rect x="127" y="265" width="3" height="1" fill="#9EF09E"/><rect x="128" y="264" width="1" height="3" fill="#9EF09E"/>
<rect x="128" y="260" width="3" height="1" fill="#9EF09E"/><rect x="129" y="259" width="1" height="3" fill="#9EF09E"/>
<rect x="128" y="255" width="3" height="1" fill="#9EF09E"/><rect x="129" y="254" width="1" height="3" fill="#9EF09E"/>
<rect x="129" y="249" width="3" height="1" fill="#9EF09E"/><rect x="130" y="248" width="1" height="3" fill="#9EF09E"/>
<rect x="129" y="244" width="3" height="1" fill="#9EF09E"/><rect x="130" y="243" width="1" height="3" fill="#9EF09E"/>
<rect x="130" y="239" width="3" height="1" fill="#9EF09E"/><rect x="131" y="238" width="1" height="3" fill="#9EF09E"/>
<rect x="130" y="234" width="3" height="1" fill="#9EF09E"/><rect x="131" y="233" width="1" height="3" fill="#9EF09E"/>
<rect x="131" y="229" width="3" height="1" fill="#9EF09E"/><rect x="132" y="228" width="1" height="3" fill="#9EF09E"/>
<rect x="131" y="224" width="3" height="1" fill="#9EF09E"/><rect x="132" y="223" width="1" height="3" fill="#9EF09E"/>
<rect x="132" y="219" width="3" height="1" fill="#9EF09E"/><rect x="133" y="218" width="1" height="3" fill="#9EF09E"/>
<rect x="132" y="214" width="3" height="1" fill="#9EF09E"/><rect x="133" y="213" width="1" height="3" fill="#9EF09E"/>
<rect x="133" y="209" width="3" height="1" fill="#9EF09E"/><rect x="134" y="208" width="1" height="3" fill="#9EF09E"/>
<rect x="133" y="204" width="3" height="1" fill="#9EF09E"/><rect x="134" y="203" width="1" height="3" fill="#9EF09E"/>
<rect x="134" y="199" width="3" height="1" fill="#9EF09E"/><rect x="135" y="198" width="1" height="3" fill="#9EF09E"/>
<rect x="134" y="194" width="3" height="1" fill="#9EF09E"/><rect x="135" y="193" width="1" height="3" fill="#9EF09E"/>
<rect x="135" y="189" width="3" height="1" fill="#9EF09E"/><rect x="136" y="188" width="1" height="3" fill="#9EF09E"/>
<rect x="135" y="184" width="3" height="1" fill="#9EF09E"/><rect x="136" y="183" width="1" height="3" fill="#9EF09E"/>
<rect x="136" y="179" width="3" height="1" fill="#9EF09E"/><rect x="137" y="178" width="1" height="3" fill="#9EF09E"/>
<rect x="136" y="174" width="3" height="1" fill="#9EF09E"/><rect x="137" y="173" width="1" height="3" fill="#9EF09E"/>
<rect x="137" y="169" width="3" height="1" fill="#9EF09E"/><rect x="138" y="168" width="1" height="3" fill="#9EF09E"/>
<rect x="137" y="164" width="3" height="1" fill="#9EF09E"/><rect x="138" y="163" width="1" height="3" fill="#9EF09E"/>
<rect x="138" y="159" width="3" height="1" fill="#9EF09E"/><rect x="139" y="158" width="1" height="3" fill="#9EF09E"/>
<rect x="139" y="154" width="3" height="1" fill="#9EF09E"/><rect x="140" y="153" width="1" height="3" fill="#9EF09E"/>
<rect x="139" y="149" width="3" height="1" fill="#9EF09E"/><rect x="140" y="148" width="1" height="3" fill="#9EF09E"/>
<rect x="140" y="144" width="3" height="1" fill="#9EF09E"/><rect x="141" y="143" width="1" height="3" fill="#9EF09E"/>
<rect x="141" y="139" width="3" height="1" fill="#9EF09E"/><rect x="142" y="138" width="1" height="3" fill="#9EF09E"/>
<rect x="142" y="134" width="3" height="1" fill="#9EF09E"/><rect x="143" y="133" width="1" height="3" fill="#9EF09E"/>
<rect x="142" y="129" width="3" height="1" fill="#9EF09E"/><rect x="143" y="128" width="1" height="3" fill="#9EF09E"/>
<rect x="143" y="124" width="3" height="1" fill="#9EF09E"/><rect x="144" y="123" width="1" height="3" fill="#9EF09E"/>
<rect x="144" y="119" width="3" height="1" fill="#9EF09E"/><rect x="145" y="118" width="1" height="3" fill="#9EF09E"/>
<rect x="145" y="114" width="3" height="1" fill="#9EF09E"/><rect x="146" y="113" width="1" height="3" fill="#9EF09E"/>
<rect x="146" y="109" width="3" height="1" fill="#9EF09E"/><rect x="147" y="108" width="1" height="3" fill="#9EF09E"/>
<rect x="148" y="104" width="3" height="1" fill="#9EF09E"/><rect x="149" y="103" width="1" height="3" fill="#9EF09E"/>
<rect x="150" y="99" width="3" height="1" fill="#9EF09E"/><rect x="151" y="98" width="1" height="3" fill="#9EF09E"/>
<rect x="158" y="103" width="3" height="1" fill="#9EF09E"/><rect x="159" y="102" width="1" height="3" fill="#9EF09E"/>
<rect x="159" y="108" width="3" height="1" fill="#9EF09E"/><rect x="160" y="107" width="1" height="3" fill="#9EF09E"/>
<rect x="160" y="113" width="3" height="1" fill="#9EF09E"/><rect x="161" y="112" width="1" height="3" fill="#9EF09E"/>
<rect x="161" y="118" width="3" height="1" fill="#9EF09E"/><rect x="162" y="117" width="1" height="3" fill="#9EF09E"/>
<rect x="162" y="123" width="3" height="1" fill="#9EF09E"/><rect x="163" y="122" width="1" height="3" fill="#9EF09E"/>
<rect x="163" y="128" width="3" height="1" fill="#9EF09E"/><rect x="164" y="127" width="1" height="3" fill="#9EF09E"/>
<rect x="164" y="133" width="3" height="1" fill="#9EF09E"/><rect x="165" y="132" width="1" height="3" fill="#9EF09E"/>
<rect x="165" y="138" width="3" height="1" fill="#9EF09E"/><rect x="166" y="137" width="1" height="3" fill="#9EF09E"/>
<rect x="166" y="143" width="3" height="1" fill="#9EF09E"/><rect x="167" y="142" width="1" height="3" fill="#9EF09E"/>
<rect x="166" y="148" width="3" height="1" fill="#9EF09E"/><rect x="167" y="147" width="1" height="3" fill="#9EF09E"/>
<rect x="167" y="153" width="3" height="1" fill="#9EF09E"/><rect x="168" y="152" width="1" height="3" fill="#9EF09E"/>
<rect x="168" y="158" width="3" height="1" fill="#9EF09E"/><rect x="169" y="157" width="1" height="3" fill="#9EF09E"/>
<rect x="168" y="163" width="3" height="1" fill="#9EF09E"/><rect x="169" y="162" width="1" height="3" fill="#9EF09E"/>
<rect x="169" y="167" width="3" height="1" fill="#9EF09E"/><rect x="170" y="166" width="1" height="3" fill="#9EF09E"/>
<rect x="169" y="172" width="3" height="1" fill="#9EF09E"/><rect x="170" y="171" width="1" height="3" fill="#9EF09E"/>
<rect x="170" y="177" width="3" height="1" fill="#9EF09E"/><rect x="171" y="176" width="1" height="3" fill="#9EF09E"/>
<rect x="171" y="182" width="3" height="1" fill="#9EF09E"/><rect x="172" y="181" width="1" height="3" fill="#9EF09E"/>
<rect x="171" y="187" width="3" height="1" fill="#9EF09E"/><rect x="172" y="186" width="1" height="3" fill="#9EF09E"/>
<rect x="172" y="192" width="3" height="1" fill="#9EF09E"/><rect x="173" y="191" width="1" height="3" fill="#9EF09E"/>
<rect x="172" y="197" width="3" height="1" fill="#9EF09E"/><rect x="173" y="196" width="1" height="3" fill="#9EF09E"/>
<rect x="172" y="202" width="3" height="1" fill="#9EF09E"/><rect x="173" y="201" width="1" height="3" fill="#9EF09E"/>
<rect x="173" y="207" width="3" height="1" fill="#9EF09E"/><rect x="174" y="206" width="1" height="3" fill="#9EF09E"/>
<rect x="173" y="212" width="3" height="1" fill="#9EF09E"/><rect x="174" y="211" width="1" height="3" fill="#9EF09E"/>
<rect x="174" y="217" width="3" height="1" fill="#9EF09E"/><rect x="175" y="216" width="1" height="3" fill="#9EF09E"/>
<rect x="174" y="222" width="3" height="1" fill="#9EF09E"/><rect x="175" y="221" width="1" height="3" fill="#9EF09E"/>
<rect x="175" y="227" width="3" height="1" fill="#9EF09E"/><rect x="176" y="226" width="1" height="3" fill="#9EF09E"/>
<rect x="175" y="231" width="3" height="1" fill="#9EF09E"/><rect x="176" y="230" width="1" height="3" fill="#9EF09E"/>
<rect x="176" y="236" width="3" height="1" fill="#9EF09E"/><rect x="177" y="235" width="1" height="3" fill="#9EF09E"/>
<rect x="176" y="241" width="3" height="1" fill="#9EF09E"/><rect x="177" y="240" width="1" height="3" fill="#9EF09E"/>
<rect x="177" y="246" width="3" height="1" fill="#9EF09E"/><rect x="178" y="245" width="1" height="3" fill="#9EF09E"/>
<rect x="177" y="251" width="3" height="1" fill="#9EF09E"/><rect x="178" y="250" width="1" height="3" fill="#9EF09E"/>
<rect x="178" y="256" width="3" height="1" fill="#9EF09E"/><rect x="179" y="255" width="1" height="3" fill="#9EF09E"/>
<rect x="178" y="261" width="3" height="1" fill="#9EF09E"/><rect x="179" y="260" width="1" height="3" fill="#9EF09E"/>
<rect x="179" y="266" width="3" height="1" fill="#9EF09E"/><rect x="180" y="265" width="1" height="3" fill="#9EF09E"/>
<rect x="179" y="271" width="3" height="1" fill="#9EF09E"/><rect x="180" y="270" width="1" height="3" fill="#9EF09E"/>
<rect x="179" y="276" width="3" height="1" fill="#9EF09E"/><rect x="180" y="275" width="1" height="3" fill="#9EF09E"/>
<rect x="180" y="281" width="3" height="1" fill="#9EF09E"/><rect x="181" y="280" width="1" height="3" fill="#9EF09E"/>
<rect x="180" y="286" width="3" height="1" fill="#9EF09E"/><rect x="181" y="285" width="1" height="3" fill="#9EF09E"/>
<rect x="181" y="291" width="3" height="1" fill="#9EF09E"/><rect x="182" y="290" width="1" height="3" fill="#9EF09E"/>
<rect x="181" y="295" width="3" height="1" fill="#9EF09E"/><rect x="182" y="294" width="1" height="3" fill="#9EF09E"/>
<rect x="182" y="300" width="3" height="1" fill="#9EF09E"/><rect x="183" y="299" width="1" height="3" fill="#9EF09E"/>
<rect x="182" y="305" width="3" height="1" fill="#9EF09E"/><rect x="183" y="304" width="1" height="3" fill="#9EF09E"/>
<rect x="182" y="310" width="3" height="1" fill="#9EF09E"/><rect x="183" y="309" width="1" height="3" fill="#9EF09E"/>
<rect x="183" y="315" width="3" height="1" fill="#9EF09E"/><rect x="184" y="314" width="1" height="3" fill="#9EF09E"/>
<rect x="183" y="320" width="3" height="1" fill="#9EF09E"/><rect x="184" y="319" width="1" height="3" fill="#9EF09E"/>
<rect x="183" y="325" width="3" height="1" fill="#9EF09E"/><rect x="184" y="324" width="1" height="3" fill="#9EF09E"/>
<rect x="184" y="330" width="3" height="1" fill="#9EF09E"/><rect x="185" y="329" width="1" height="3" fill="#9EF09E"/>
<rect x="184" y="335" width="3" height="1" fill="#9EF09E"/><rect x="185" y="334" width="1" height="3" fill="#9EF09E"/>
<rect x="184" y="340" width="3" height="1" fill="#9EF09E"/><rect x="185" y="339" width="1" height="3" fill="#9EF09E"/>
<rect x="185" y="345" width="3" height="1" fill="#9EF09E"/><rect x="186" y="344" width="1" height="3" fill="#9EF09E"/>
<rect x="185" y="350" width="3" height="1" fill="#9EF09E"/><rect x="186" y="349" width="1" height="3" fill="#9EF09E"/>
<rect x="186" y="355" width="3" height="1" fill="#9EF09E"/><rect x="187" y="354" width="1" height="3" fill="#9EF09E"/>
<rect x="186" y="359" width="3" height="1" fill="#9EF09E"/><rect x="187" y="358" width="1" height="3" fill="#9EF09E"/>
<rect x="186" y="364" width="3" height="1" fill="#9EF09E"/><rect x="187" y="363" width="1" height="3" fill="#9EF09E"/>
<rect x="187" y="369" width="3" height="1" fill="#9EF09E"/><rect x="188" y="368" width="1" height="3" fill="#9EF09E"/>
<rect x="187" y="374" width="3" height="1" fill="#9EF09E"/><rect x="188" y="373" width="1" height="3" fill="#9EF09E"/>
<rect x="188" y="379" width="3" height="1" fill="#9EF09E"/><rect x="189" y="378" width="1" height="3" fill="#9EF09E"/>
<rect x="188" y="384" width="3" height="1" fill="#9EF09E"/><rect x="189" y="383" width="1" height="3" fill="#9EF09E"/>
<rect x="189" y="389" width="3" height="1" fill="#9EF09E"/><rect x="190" y="388" width="1" height="3" fill="#9EF09E"/>
<rect x="189" y="394" width="3" height="1" fill="#9EF09E"/><rect x="190" y="393" width="1" height="3" fill="#9EF09E"/>
<rect x="190" y="399" width="3" height="1" fill="#9EF09E"/><rect x="191" y="398" width="1" height="3" fill="#9EF09E"/>
<rect x="190" y="404" width="3" height="1" fill="#9EF09E"/><rect x="191" y="403" width="1" height="3" fill="#9EF09E"/>
<rect x="190" y="409" width="3" height="1" fill="#9EF09E"/><rect x="191" y="408" width="1" height="3" fill="#9EF09E"/>
<rect x="191" y="414" width="3" height="1" fill="#9EF09E"/><rect x="192" y="413" width="1" height="3" fill="#9EF09E"/>
<rect x="191" y="419" width="3" height="1" fill="#9EF09E"/><rect x="192" y="418" width="1" height="3" fill="#9EF09E"/>
<rect x="192" y="423" width="3" height="1" fill="#9EF09E"/><rect x="193" y="422" width="1" height="3" fill="#9EF09E"/>
<rect x="192" y="428" width="3" height="1" fill="#9EF09E"/><rect x="193" y="427" width="1" height="3" fill="#9EF09E"/>
<rect x="192" y="433" width="3" height="1" fill="#9EF09E"/><rect x="193" y="432" width="1" height="3" fill="#9EF09E"/>
<rect x="193" y="438" width="3" height="1" fill="#9EF09E"/><rect x="194" y="437" width="1" height="3" fill="#9EF09E"/>
<rect x="193" y="443" width="3" height="1" fill="#9EF09E"/><rect x="194" y="442" width="1" height="3" fill="#9EF09E"/>
<rect x="194" y="448" width="3" height="1" fill="#9EF09E"/><rect x="195" y="447" width="1" height="3" fill="#9EF09E"/>
<rect x="194" y="453" width="3" height="1" fill="#9EF09E"/><rect x="195" y="452" width="1" height="3" fill="#9EF09E"/>
<rect x="195" y="458" width="3" height="1" fill="#9EF09E"/><rect x="196" y="457" width="1" height="3" fill="#9EF09E"/>
<rect x="195" y="463" width="3" height="1" fill="#9EF09E"/><rect x="196" y="462" width="1" height="3" fill="#9EF09E"/>
<rect x="196" y="468" width="3" height="1" fill="#9EF09E"/><rect x="197" y="467" width="1" height="3" fill="#9EF09E"/>
<rect x="196" y="473" width="3" height="1" fill="#9EF09E"/><rect x="197" y="472" width="1" height="3" fill="#9EF09E"/>
<rect x="197" y="478" width="3" height="1" fill="#9EF09E"/><rect x="198" y="477" width="1" height="3" fill="#9EF09E"/>
<rect x="197" y="483" width="3" height="1" fill="#9EF09E"/><rect x="198" y="482" width="1" height="3" fill="#9EF09E"/>
<rect x="198" y="487" width="3" height="1" fill="#9EF09E"/><rect x="199" y="486" width="1" height="3" fill="#9EF09E"/>
<rect x="198" y="492" width="3" height="1" fill="#9EF09E"/><rect x="199" y="491" width="1" height="3" fill="#9EF09E"/>
<rect x="199" y="497" width="3" height="1" fill="#9EF09E"/><rect x="200" y="496" width="1" height="3" fill="#9EF09E"/>
<rect x="199" y="502" width="3" height="1" fill="#9EF09E"/><rect x="200" y="501" width="1" height="3" fill="#9EF09E"/>
<rect x="200" y="507" width="3" height="1" fill="#9EF09E"/><rect x="201" y="506" width="1" height="3" fill="#9EF09E"/>
<rect x="201" y="512" width="3" height="1" fill="#9EF09E"/><rect x="202" y="511" width="1" height="3" fill="#9EF09E"/>
<rect x="202" y="517" width="3" height="1" fill="#9EF09E"/><rect x="203" y="516" width="1" height="3" fill="#9EF09E"/>
<rect x="202" y="522" width="3" height="1" fill="#9EF09E"/><rect x="203" y="521" width="1" height="3" fill="#9EF09E"/>
<rect x="203" y="527" width="3" height="1" fill="#9EF09E"/><rect x="204" y="526" width="1" height="3" fill="#9EF09E"/>
<rect x="204" y="532" width="3" height="1" fill="#9EF09E"/><rect x="205" y="531" width="1" height="3" fill="#9EF09E"/>
<rect x="205" y="537" width="3" height="1" fill="#9EF09E"/><rect x="206" y="536" width="1" height="3" fill="#9EF09E"/>
<rect x="206" y="542" width="3" height="1" fill="#9EF09E"/><rect x="207" y="541" width="1" height="3" fill="#9EF09E"/>
<rect x="207" y="547" width="3" height="1" fill="#9EF09E"/><rect x="208" y="546" width="1" height="3" fill="#9EF09E"/>
<rect x="208" y="551" width="3" height="1" fill="#9EF09E"/><rect x="209" y="550" width="1" height="3" fill="#9EF09E"/>
<rect x="208" y="556" width="3" height="1" fill="#9EF09E"/><rect x="209" y="555" width="1" height="3" fill="#9EF09E"/>
<rect x="211" y="561" width="3" height="1" fill="#9EF09E"/><rect x="212" y="560" width="1" height="3" fill="#9EF09E"/>
<rect x="220" y="557" width="3" height="1" fill="#9EF09E"/><rect x="221" y="556" width="1" height="3" fill="#9EF09E"/>
<rect x="222" y="552" width="3" height="1" fill="#9EF09E"/><rect x="223" y="551" width="1" height="3" fill="#9EF09E"/>
<rect x="223" y="547" width="3" height="1" fill="#9EF09E"/><rect x="224" y="546" width="1" height="3" fill="#9EF09E"/>
<rect x="224" y="542" width="3" height="1" fill="#9EF09E"/><rect x="225" y="541" width="1" height="3" fill="#9EF09E"/>
<rect x="225" y="537" width="3" height="1" fill="#9EF09E"/><rect x="226" y="536" width="1" height="3" fill="#9EF09E"/>
<rect x="225" y="532" width="3" height="1" fill="#9EF09E"/><rect x="226" y="531" width="1" height="3" fill="#9EF09E"/>
<rect x="226" y="527" width="3" height="1" fill="#9EF09E"/><rect x="227" y="526" width="1" height="3" fill="#9EF09E"/>
<rect x="227" y="522" width="3" height="1" fill="#9EF09E"/><rect x="228" y="521" width="1" height="3" fill="#9EF09E"/>
<rect x="227" y="517" width="3" height="1" fill="#9EF09E"/><rect x="228" y="516" width="1" height="3" fill="#9EF09E"/>
<rect x="228" y="512" width="3" height="1" fill="#9EF09E"/><rect x="229" y="511" width="1" height="3" fill="#9EF09E"/>
<rect x="229" y="507" width="3" height="1" fill="#9EF09E"/><rect x="230" y="506" width="1" height="3" fill="#9EF09E"/>
<rect x="229" y="502" width="3" height="1" fill="#9EF09E"/><rect x="230" y="501" width="1" height="3" fill="#9EF09E"/>
<rect x="229" y="498" width="3" height="1" fill="#9EF09E"/><rect x="230" y="497" width="1" height="3" fill="#9EF09E"/>
<rect x="230" y="493" width="3" height="1" fill="#9EF09E"/><rect x="231" y="492" width="1" height="3" fill="#9EF09E"/>
<rect x="231" y="488" width="3" height="1" fill="#9EF09E"/><rect x="232" y="487" width="1" height="3" fill="#9EF09E"/>
<rect x="231" y="483" width="3" height="1" fill="#9EF09E"/><rect x="232" y="482" width="1" height="3" fill="#9EF09E"/>
<rect x="232" y="478" width="3" height="1" fill="#9EF09E"/><rect x="233" y="477" width="1" height="3" fill="#9EF09E"/>
<rect x="232" y="473" width="3" height="1" fill="#9EF09E"/><rect x="233" y="472" width="1" height="3" fill="#9EF09E"/>
<rect x="233" y="468" width="3" height="1" fill="#9EF09E"/><rect x="234" y="467" width="1" height="3" fill="#9EF09E"/>
<rect x="233" y="463" width="3" height="1" fill="#9EF09E"/><rect x="234" y="462" width="1" height="3" fill="#9EF09E"/>
<rect x="234" y="458" width="3" height="1" fill="#9EF09E"/><rect x="235" y="457" width="1" height="3" fill="#9EF09E"/>
<rect x="234" y="453" width="3" height="1" fill="#9EF09E"/><rect x="235" y="452" width="1" height="3" fill="#9EF09E"/>
<rect x="235" y="448" width="3" height="1" fill="#9EF09E"/><rect x="236" y="447" width="1" height="3" fill="#9EF09E"/>
<rect x="235" y="443" width="3" height="1" fill="#9EF09E"/><rect x="236" y="442" width="1" height="3" fill="#9EF09E"/>
<rect x="236" y="439" width="3" height="1" fill="#9EF09E"/><rect x="237" y="438" width="1" height="3" fill="#9EF09E"/>
<rect x="236" y="434" width="3" height="1" fill="#9EF09E"/><rect x="237" y="433" width="1" height="3" fill="#9EF09E"/>
<rect x="237" y="429" width="3" height="1" fill="#9EF09E"/><rect x="238" y="428" width="1" height="3" fill="#9EF09E"/>
<rect x="237" y="424" width="3" height="1" fill="#9EF09E"/><rect x="238" y="423" width="1" height="3" fill="#9EF09E"/>
<rect x="238" y="419" width="3" height="1" fill="#9EF09E"/><rect x="239" y="418" width="1" height="3" fill="#9EF09E"/>
<rect x="238" y="414" width="3" height="1" fill="#9EF09E"/><rect x="239" y="413" width="1" height="3" fill="#9EF09E"/>
<rect x="239" y="409" width="3" height="1" fill="#9EF09E"/><rect x="240" y="408" width="1" height="3" fill="#9EF09E"/>
<rect x="239" y="404" width="3" height="1" fill="#9EF09E"/><rect x="240" y="403" width="1" height="3" fill="#9EF09E"/>
<rect x="239" y="399" width="3" height="1" fill="#9EF09E"/><rect x="240" y="398" width="1" height="3" fill="#9EF09E"/>
<rect x="240" y="394" width="3" height="1" fill="#9EF09E"/><rect x="241" y="393" width="1" height="3" fill="#9EF09E"/>
<rect x="240" y="389" width="3" height="1" fill="#9EF09E"/><rect x="241" y="388" width="1" height="3" fill="#9EF09E"/>
<rect x="241" y="384" width="3" height="1" fill="#9EF09E"/><rect x="242" y="383" width="1" height="3" fill="#9EF09E"/>
<rect x="241" y="379" width="3" height="1" fill="#9EF09E"/><rect x="242" y="378" width="1" height="3" fill="#9EF09E"/>
<rect x="242" y="375" width="3" height="1" fill="#9EF09E"/><rect x="243" y="374" width="1" height="3" fill="#9EF09E"/>
<rect x="242" y="370" width="3" height="1" fill="#9EF09E"/><rect x="243" y="369" width="1" height="3" fill="#9EF09E"/>
<rect x="242" y="365" width="3" height="1" fill="#9EF09E"/><rect x="243" y="364" width="1" height="3" fill="#9EF09E"/>
<rect x="243" y="360" width="3" height="1" fill="#9EF09E"/><rect x="244" y="359" width="1" height="3" fill="#9EF09E"/>
<rect x="243" y="355" width="3" height="1" fill="#9EF09E"/><rect x="244" y="354" width="1" height="3" fill="#9EF09E"/>
<rect x="243" y="350" width="3" height="1" fill="#9EF09E"/><rect x="244" y="349" width="1" height="3" fill="#9EF09E"/>
<rect x="244" y="345" width="3" height="1" fill="#9EF09E"/><rect x="245" y="344" width="1" height="3" fill="#9EF09E"/>
<rect x="244" y="340" width="3" height="1" fill="#9EF09E"/><rect x="245" y="339" width="1" height="3" fill="#9EF09E"/>
<rect x="245" y="335" width="3" height="1" fill="#9EF09E"/><rect x="246" y="334" width="1" height="3" fill="#9EF09E"/>
<rect x="245" y="330" width="3" height="1" fill="#9EF09E"/><rect x="246" y="329" width="1" height="3" fill="#9EF09E"/>
<rect x="247" y="303" width="3" height="1" fill="#9EF09E"/><rect x="248" y="302" width="1" height="3" fill="#9EF09E"/>
<rect x="249" y="276" width="3" height="1" fill="#9EF09E"/><rect x="250" y="275" width="1" height="3" fill="#9EF09E"/>
<rect x="251" y="249" width="3" height="1" fill="#9EF09E"/><rect x="252" y="248" width="1" height="3" fill="#9EF09E"/>
<rect x="253" y="222" width="3" height="1" fill="#9EF09E"/><rect x="254" y="221" width="1" height="3" fill="#9EF09E"/>
<rect x="255" y="195" width="3" height="1" fill="#9EF09E"/><rect x="256" y="194" width="1" height="3" fill="#9EF09E"/>
<rect x="257" y="222" width="3" height="1" fill="#9EF09E"/><rect x="258" y="221" width="1" height="3" fill="#9EF09E"/>
<rect x="259" y="249" width="3" height="1" fill="#9EF09E"/><rect x="260" y="248" width="1" height="3" fill="#9EF09E"/>
<rect x="261" y="276" width="3" height="1" fill="#9EF09E"/><rect x="262" y="275" width="1" height="3" fill="#9EF09E"/>
<rect x="263" y="303" width="3" height="1" fill="#9EF09E"/><rect x="264" y="302" width="1" height="3" fill="#9EF09E"/>
<rect x="266" y="330" width="3" height="1" fill="#9EF09E"/><rect x="267" y="329" width="1" height="3" fill="#9EF09E"/>
<rect x="268" y="357" width="3" height="1" fill="#9EF09E"/><rect x="269" y="356" width="1" height="3" fill="#9EF09E"/>
<rect x="270" y="384" width="3" height="1" fill="#9EF09E"/><rect x="271" y="383" width="1" height="3" fill="#9EF09E"/>
<rect x="272" y="410" width="3" height="1" fill="#9EF09E"/><rect x="273" y="409" width="1" height="3" fill="#9EF09E"/>
<rect x="274" y="437" width="3" height="1" fill="#9EF09E"/><rect x="275" y="436" width="1" height="3" fill="#9EF09E"/>
<rect x="276" y="464" width="3" height="1" fill="#9EF09E"/><rect x="277" y="463" width="1" height="3" fill="#9EF09E"/>
<rect x="278" y="437" width="3" height="1" fill="#9EF09E"/><rect x="279" y="436" width="1" height="3" fill="#9EF09E"/>
<rect x="280" y="410" width="3" height="1" fill="#9EF09E"/><rect x="281" y="409" width="1" height="3" fill="#9EF09E"/>
<rect x="282" y="384" width="3" height="1" fill="#9EF09E"/><rect x="283" y="383" width="1" height="3" fill="#9EF09E"/>
<rect x="284" y="357" width="3" height="1" fill="#9EF09E"/><rect x="285" y="356" width="1" height="3" fill="#9EF09E"/>
<rect x="286" y="330" width="3" height="1" fill="#9EF09E"/><rect x="287" y="329" width="1" height="3" fill="#9EF09E"/>
<rect x="288" y="303" width="3" height="1" fill="#9EF09E"/><rect x="289" y="302" width="1" height="3" fill="#9EF09E"/>
<rect x="290" y="276" width="3" height="1" fill="#9EF09E"/><rect x="291" y="275" width="1" height="3" fill="#9EF09E"/>
<rect x="292" y="249" width="3" height="1" fill="#9EF09E"/><rect x="293" y="248" width="1" height="3" fill="#9EF09E"/>
<rect x="294" y="222" width="3" height="1" fill="#9EF09E"/><rect x="295" y="221" width="1" height="3" fill="#9EF09E"/>
<rect x="296" y="195" width="3" height="1" fill="#9EF09E"/><rect x="297" y="194" width="1" height="3" fill="#9EF09E"/>
<rect x="298" y="222" width="3" height="1" fill="#9EF09E"/><rect x="299" y="221" width="1" height="3" fill="#9EF09E"/>
<rect x="300" y="249" width="3" height="1" fill="#9EF09E"/><rect x="301" y="248" width="1" height="3" fill="#9EF09E"/>
<rect x="302" y="276" width="3" height="1" fill="#9EF09E"/><rect x="303" y="275" width="1" height="3" fill="#9EF09E"/>
<rect x="304" y="303" width="3" height="1" fill="#9EF09E"/><rect x="305" y="302" width="1" height="3" fill="#9EF09E"/>
<rect x="306" y="330" width="3" height="1" fill="#9EF09E"/><rect x="307" y="329" width="1" height="3" fill="#9EF09E"/>
<rect x="309" y="357" width="3" height="1" fill="#9EF09E"/><rect x="310" y="356" width="1" height="3" fill="#9EF09E"/>
<rect x="311" y="384" width="3" height="1" fill="#9EF09E"/><rect x="312" y="383" width="1" height="3" fill="#9EF09E"/>
<rect x="313" y="410" width="3" height="1" fill="#9EF09E"/><rect x="314" y="409" width="1" height="3" fill="#9EF09E"/>
<rect x="315" y="437" width="3" height="1" fill="#9EF09E"/><rect x="316" y="436" width="1" height="3" fill="#9EF09E"/>
<rect x="317" y="464" width="3" height="1" fill="#9EF09E"/><rect x="318" y="463" width="1" height="3" fill="#9EF09E"/>
<rect x="319" y="437" width="3" height="1" fill="#9EF09E"/><rect x="320" y="436" width="1" height="3" fill="#9EF09E"/>
<rect x="321" y="410" width="3" height="1" fill="#9EF09E"/><rect x="322" y="409" width="1" height="3" fill="#9EF09E"/>
<rect x="323" y="384" width="3" height="1" fill="#9EF09E"/><rect x="324" y="383" width="1" height="3" fill="#9EF09E"/>
<rect x="325" y="357" width="3" height="1" fill="#9EF09E"/><rect x="326" y="356" width="1" height="3" fill="#9EF09E"/>
<rect x="327" y="330" width="3" height="1" fill="#9EF09E"/><rect x="328" y="329" width="1" height="3" fill="#9EF09E"/>
<rect x="329" y="303" width="3" height="1" fill="#9EF09E"/><rect x="330" y="302" width="1" height="3" fill="#9EF09E"/>
<rect x="331" y="276" width="3" height="1" fill="#9EF09E"/><rect x="332" y="275" width="1" height="3" fill="#9EF09E"/>
<rect x="333" y="249" width="3" height="1" fill="#9EF09E"/><rect x="334" y="248" width="1" height="3" fill="#9EF09E"/>
<rect x="335" y="222" width="3" height="1" fill="#9EF09E"/><rect x="336" y="221" width="1" height="3" fill="#9EF09E"/>
<rect x="337" y="195" width="3" height="1" fill="#9EF09E"/><rect x="338" y="194" width="1" height="3" fill="#9EF09E"/>
<rect x="339" y="222" width="3" height="1" fill="#9EF09E"/><rect x="340" y="221" width="1" height="3" fill="#9EF09E"/>
<rect x="341" y="249" width="3" height="1" fill="#9EF09E"/><rect x="342" y="248" width="1" height="3" fill="#9EF09E"/>
<rect x="343" y="276" width="3" height="1" fill="#9EF09E"/><rect x="344" y="275" width="1" height="3" fill="#9EF09E"/>
<rect x="345" y="303" width="3" height="1" fill="#9EF09E"/><rect x="346" y="302" width="1" height="3" fill="#9EF09E"/>
<rect x="348" y="330" width="3" height="1" fill="#9EF09E"/><rect x="349" y="329" width="1" height="3" fill="#9EF09E"/>
<rect x="350" y="357" width="3" height="1" fill="#9EF09E"/><rect x="351" y="356" width="1" height="3" fill="#9EF09E"/>
<rect x="352" y="384" width="3" height="1" fill="#9EF09E"/><rect x="353" y="383" width="1" height="3" fill="#9EF09E"/>
<rect x="354" y="410" width="3" height="1" fill="#9EF09E"/><rect x="355" y="409" width="1" height="3" fill="#9EF09E"/>
<rect x="356" y="437" width="3" height="1" fill="#9EF09E"/><rect x="357" y="436" width="1" height="3" fill="#9EF09E"/>
<rect x="358" y="464" width="3" height="1" fill="#9EF09E"/><rect x="359" y="463" width="1" height="3" fill="#9EF09E"/>
<rect x="360" y="437" width="3" height="1" fill="#9EF09E"/><rect x="361" y="436" width="1" height="3" fill="#9EF09E"/>
<rect x="362" y="410" width="3" height="1" fill="#9EF09E"/><rect x="363" y="409" width="1" height="3" fill="#9EF09E"/>
<rect x="364" y="383" width="3" height="1" fill="#9EF09E"/><rect x="365" y="382" width="1" height="3" fill="#9EF09E"/>
<rect x="366" y="357" width="3" height="1" fill="#9EF09E"/><rect x="367" y="356" width="1" height="3" fill="#9EF09E"/>
<rect x="368" y="330" width="3" height="1" fill="#9EF09E"/><rect x="369" y="329" width="1" height="3" fill="#9EF09E"/>
<rect x="491" y="330" width="3" height="1" fill="#9EF09E"/><rect x="492" y="329" width="1" height="3" fill="#9EF09E"/>
<rect x="492" y="324" width="3" height="1" fill="#9EF09E"/><rect x="493" y="323" width="1" height="3" fill="#9EF09E"/>
<rect x="493" y="317" width="3" height="1" fill="#9EF09E"/><rect x="494" y="316" width="1" height="3" fill="#9EF09E"/>
<rect x="495" y="311" width="3" height="1" fill="#9EF09E"/><rect x="496" y="310" width="1" height="3" fill="#9EF09E"/>
<rect x="496" y="304" width="3" height="1" fill="#9EF09E"/><rect x="497" y="303" width="1" height="3" fill="#9EF09E"/>
<rect x="497" y="297" width="3" height="1" fill="#9EF09E"/><rect x="498" y="296" width="1" height="3" fill="#9EF09E"/>
<rect x="498" y="291" width="3" height="1" fill="#9EF09E"/><rect x="499" y="290" width="1" height="3" fill="#9EF09E"/>
<rect x="500" y="284" width="3" height="1" fill="#9EF09E"/><rect x="501" y="283" width="1" height="3" fill="#9EF09E"/>
<rect x="501" y="278" width="3" height="1" fill="#9EF09E"/><rect x="502" y="277" width="1" height="3" fill="#9EF09E"/>
<rect x="502" y="271" width="3" height="1" fill="#9EF09E"/><rect x="503" y="270" width="1" height="3" fill="#9EF09E"/>
<rect x="503" y="264" width="3" height="1" fill="#9EF09E"/><rect x="504" y="263" width="1" height="3" fill="#9EF09E"/>
<rect x="505" y="258" width="3" height="1" fill="#9EF09E"/><rect x="506" y="257" width="1" height="3" fill="#9EF09E"/>
<rect x="506" y="251" width="3" height="1" fill="#9EF09E"/><rect x="507" y="250" width="1" height="3" fill="#9EF09E"/>
<rect x="507" y="245" width="3" height="1" fill="#9EF09E"/><rect x="508" y="244" width="1" height="3" fill="#9EF09E"/>
<rect x="508" y="238" width="3" height="1" fill="#9EF09E"/><rect x="509" y="237" width="1" height="3" fill="#9EF09E"/>
<rect x="509" y="231" width="3" height="1" fill="#9EF09E"/><rect x="510" y="230" width="1" height="3" fill="#9EF09E"/>
<rect x="510" y="225" width="3" height="1" fill="#9EF09E"/><rect x="511" y="224" width="1" height="3" fill="#9EF09E"/>
<rect x="512" y="218" width="3" height="1" fill="#9EF09E"/><rect x="513" y="217" width="1" height="3" fill="#9EF09E"/>
<rect x="513" y="212" width="3" height="1" fill="#9EF09E"/><rect x="514" y="211" width="1" height="3" fill="#9EF09E"/>
<rect x="514" y="205" width="3" height="1" fill="#9EF09E"/><rect x="515" y="204" width="1" height="3" fill="#9EF09E"/>
<rect x="516" y="198" width="3" height="1" fill="#9EF09E"/><rect x="517" y="197" width="1" height="3" fill="#9EF09E"/>
<rect x="517" y="192" width="3" height="1" fill="#9EF09E"/><rect x="518" y="191" width="1" height="3" fill="#9EF09E"/>
<rect x="518" y="185" width="3" height="1" fill="#9EF09E"/><rect x="519" y="184" width="1" height="3" fill="#9EF09E"/>
<rect x="519" y="178" width="3" height="1" fill="#9EF09E"/><rect x="520" y="177" width="1" height="3" fill="#9EF09E"/>
<rect x="521" y="172" width="3" height="1" fill="#9EF09E"/><rect x="522" y="171" width="1" height="3" fill="#9EF09E"/>
<rect x="522" y="165" width="3" height="1" fill="#9EF09E"/><rect x="523" y="164" width="1" height="3" fill="#9EF09E"/>
<rect x="523" y="159" width="3" height="1" fill="#9EF09E"/><rect x="524" y="158" width="1" height="3" fill="#9EF09E"/>
<rect x="524" y="152" width="3" height="1" fill="#9EF09E"/><rect x="525" y="151" width="1" height="3" fill="#9EF09E"/>
<rect x="525" y="145" width="3" height="1" fill="#9EF09E"/><rect x="526" y="144" width="1" height="3" fill="#9EF09E"/>
<rect x="526" y="139" width="3" height="1" fill="#9EF09E"/><rect x="527" y="138" width="1" height="3" fill="#9EF09E"/>
<rect x="528" y="132" width="3" height="1" fill="#9EF09E"/><rect x="529" y="131" width="1" height="3" fill="#9EF09E"/>
<rect x="529" y="126" width="3" height="1" fill="#9EF09E"/><rect x="530" y="125" width="1" height="3" fill="#9EF09E"/>
<rect x="530" y="119" width="3" height="1" fill="#9EF09E"/><rect x="531" y="118" width="1" height="3" fill="#9EF09E"/>
<rect x="532" y="112" width="3" height="1" fill="#9EF09E"/><rect x="533" y="111" width="1" height="3" fill="#9EF09E"/>
<rect x="533" y="106" width="3" height="1" fill="#9EF09E"/><rect x="534" y="105" width="1" height="3" fill="#9EF09E"/>
<rect x="534" y="99" width="3" height="1" fill="#9EF09E"/><rect x="535" y="98" width="1" height="3" fill="#9EF09E"/>
<rect x="535" y="93" width="3" height="1" fill="#9EF09E"/><rect x="536" y="92" width="1" height="3" fill="#9EF09E"/>
<rect x="537" y="86" width="3" height="1" fill="#9EF09E"/><rect x="538" y="85" width="1" height="3" fill="#9EF09E"/>
<rect x="538" y="79" width="3" height="1" fill="#9EF09E"/><rect x="539" y="78" width="1" height="3" fill="#9EF09E"/>
<rect x="539" y="73" width="3" height="1" fill="#9EF09E"/><rect x="540" y="72" width="1" height="3" fill="#9EF09E"/>
<rect x="540" y="66" width="3" height="1" fill="#9EF09E"/><rect x="541" y="65" width="1" height="3" fill="#9EF09E"/>
<rect x="542" y="59" width="3" height="1" fill="#9EF09E"/><rect x="543" y="58" width="1" height="3" fill="#9EF09E"/>
<rect x="543" y="53" width="3" height="1" fill="#9EF09E"/><rect x="544" y="52" width="1" height="3" fill="#9EF09E"/>
<rect x="544" y="46" width="3" height="1" fill="#9EF09E"/><rect x="545" y="45" width="1" height="3" fill="#9EF09E"/>
<rect x="546" y="40" width="3" height="1" fill="#9EF09E"/><rect x="547" y="39" width="1" height="3" fill="#9EF09E"/>
<rect x="547" y="33" width="3" height="1" fill="#9EF09E"/><rect x="548" y="32" width="1" height="3" fill="#9EF09E"/>
<rect x="548" y="26" width="3" height="1" fill="#9EF09E"/><rect x="549" y="25" width="1" height="3" fill="#9EF09E"/>
<rect x="549" y="20" width="3" height="1" fill="#9EF09E"/><rect x="550" y="19" width="1" height="3" fill="#9EF09E"/>
<rect x="550" y="13" width="3" height="1" fill="#9EF09E"/><rect x="551" y="12" width="1" height="3" fill="#9EF09E"/>
<rect x="551" y="7" width="3" height="1" fill="#9EF09E"/><rect x="552" y="6" width="1" height="3" fill="#9EF09E"/>
<rect x="552" y="0" width="3" height="1" fill="#9EF09E"/><rect x="553" y="-1" width="1" height="3" fill="#9EF09E"/>
<rect x="554" y="7" width="3" height="1" fill="#9EF09E"/><rect x="555" y="6" width="1" height="3" fill="#9EF09E"/>
<rect x="555" y="13" width="3" height="1" fill="#9EF09E"/><rect x="556" y="12" width="1" height="3" fill="#9EF09E"/>
<rect x="556" y="20" width="3" height="1" fill="#9EF09E"/><rect x="557" y="19" width="1" height="3" fill="#9EF09E"/>
<rect x="557" y="26" width="3" height="1" fill="#9EF09E"/><rect x="558" y="25" width="1" height="3" fill="#9EF09E"/>
<rect x="559" y="33" width="3" height="1" fill="#9EF09E"/><rect x="560" y="32" width="1" height="3" fill="#9EF09E"/>
<rect x="560" y="39" width="3" height="1" fill="#9EF09E"/><rect x="561" y="38" width="1" height="3" fill="#9EF09E"/>
<rect x="561" y="46" width="3" height="1" fill="#9EF09E"/><rect x="562" y="45" width="1" height="3" fill="#9EF09E"/>
<rect x="563" y="53" width="3" height="1" fill="#9EF09E"/><rect x="564" y="52" width="1" height="3" fill="#9EF09E"/>
<rect x="564" y="59" width="3" height="1" fill="#9EF09E"/><rect x="565" y="58" width="1" height="3" fill="#9EF09E"/>
<rect x="565" y="66" width="3" height="1" fill="#9EF09E"/><rect x="566" y="65" width="1" height="3" fill="#9EF09E"/>
<rect x="566" y="72" width="3" height="1" fill="#9EF09E"/><rect x="567" y="71" width="1" height="3" fill="#9EF09E"/>
<rect x="568" y="79" width="3" height="1" fill="#9EF09E"/><rect x="569" y="78" width="1" height="3" fill="#9EF09E"/>
<rect x="569" y="86" width="3" height="1" fill="#9EF09E"/><rect x="570" y="85" width="1" height="3" fill="#9EF09E"/>
<rect x="570" y="92" width="3" height="1" fill="#9EF09E"/><rect x="571" y="91" width="1" height="3" fill="#9EF09E"/>
<rect x="571" y="99" width="3" height="1" fill="#9EF09E"/><rect x="572" y="98" width="1" height="3" fill="#9EF09E"/>
<rect x="572" y="105" width="3" height="1" fill="#9EF09E"/><rect x="573" y="104" width="1" height="3" fill="#9EF09E"/>
<rect x="574" y="112" width="3" height="1" fill="#9EF09E"/><rect x="575" y="111" width="1" height="3" fill="#9EF09E"/>
<rect x="575" y="118" width="3" height="1" fill="#9EF09E"/><rect x="576" y="117" width="1" height="3" fill="#9EF09E"/>
<rect x="576" y="125" width="3" height="1" fill="#9EF09E"/><rect x="577" y="124" width="1" height="3" fill="#9EF09E"/>
<rect x="577" y="132" width="3" height="1" fill="#9EF09E"/><rect x="578" y="131" width="1" height="3" fill="#9EF09E"/>
<rect x="578" y="138" width="3" height="1" fill="#9EF09E"/><rect x="579" y="137" width="1" height="3" fill="#9EF09E"/>
<rect x="579" y="145" width="3" height="1" fill="#9EF09E"/><rect x="580" y="144" width="1" height="3" fill="#9EF09E"/>
<rect x="581" y="151" width="3" height="1" fill="#9EF09E"/><rect x="582" y="150" width="1" height="3" fill="#9EF09E"/>
<rect x="582" y="158" width="3" height="1" fill="#9EF09E"/><rect x="583" y="157" width="1" height="3" fill="#9EF09E"/>
<rect x="583" y="164" width="3" height="1" fill="#9EF09E"/><rect x="584" y="163" width="1" height="3" fill="#9EF09E"/>
<rect x="584" y="171" width="3" height="1" fill="#9EF09E"/><rect x="585" y="170" width="1" height="3" fill="#9EF09E"/>
<rect x="586" y="178" width="3" height="1" fill="#9EF09E"/><rect x="587" y="177" width="1" height="3" fill="#9EF09E"/>
<rect x="587" y="184" width="3" height="1" fill="#9EF09E"/><rect x="588" y="183" width="1" height="3" fill="#9EF09E"/>
<rect x="589" y="191" width="3" height="1" fill="#9EF09E"/><rect x="590" y="190" width="1" height="3" fill="#9EF09E"/>
<rect x="590" y="197" width="3" height="1" fill="#9EF09E"/><rect x="591" y="196" width="1" height="3" fill="#9EF09E"/>
<rect x="591" y="204" width="3" height="1" fill="#9EF09E"/><rect x="592" y="203" width="1" height="3" fill="#9EF09E"/>
<rect x="592" y="211" width="3" height="1" fill="#9EF09E"/><rect x="593" y="210" width="1" height="3" fill="#9EF09E"/>
<rect x="594" y="217" width="3" height="1" fill="#9EF09E"/><rect x="595" y="216" width="1" height="3" fill="#9EF09E"/>
<rect x="595" y="224" width="3" height="1" fill="#9EF09E"/><rect x="596" y="223" width="1" height="3" fill="#9EF09E"/>
<rect x="596" y="230" width="3" height="1" fill="#9EF09E"/><rect x="597" y="229" width="1" height="3" fill="#9EF09E"/>
<rect x="598" y="237" width="3" height="1" fill="#9EF09E"/><rect x="599" y="236" width="1" height="3" fill="#9EF09E"/>
<rect x="599" y="243" width="3" height="1" fill="#9EF09E"/><rect x="600" y="242" width="1" height="3" fill="#9EF09E"/>
<rect x="600" y="250" width="3" height="1" fill="#9EF09E"/><rect x="601" y="249" width="1" height="3" fill="#9EF09E"/>
<rect x="601" y="257" width="3" height="1" fill="#9EF09E"/><rect x="602" y="256" width="1" height="3" fill="#9EF09E"/>
<rect x="602" y="263" width="3" height="1" fill="#9EF09E"/><rect x="603" y="262" width="1" height="3" fill="#9EF09E"/>
<rect x="603" y="270" width="3" height="1" fill="#9EF09E"/><rect x="604" y="269" width="1" height="3" fill="#9EF09E"/>
<rect x="604" y="276" width="3" height="1" fill="#9EF09E"/><rect x="605" y="275" width="1" height="3" fill="#9EF09E"/>
<rect x="605" y="283" width="3" height="1" fill="#9EF09E"/><rect x="606" y="282" width="1" height="3" fill="#9EF09E"/>
<rect x="606" y="290" width="3" height="1" fill="#9EF09E"/><rect x="607" y="289" width="1" height="3" fill="#9EF09E"/>
<rect x="607" y="296" width="3" height="1" fill="#9EF09E"/><rect x="608" y="295" width="1" height="3" fill="#9EF09E"/>
<rect x="608" y="303" width="3" height="1" fill="#9EF09E"/><rect x="609" y="302" width="1" height="3" fill="#9EF09E"/>
<rect x="610" y="309" width="3" height="1" fill="#9EF09E"/><rect x="611" y="308" width="1" height="3" fill="#9EF09E"/>
<rect x="611" y="316" width="3" height="1" fill="#9EF09E"/><rect x="612" y="315" width="1" height="3" fill="#9EF09E"/>
<rect x="613" y="322" width="3" height="1" fill="#9EF09E"/><rect x="614" y="321" width="1" height="3" fill="#9EF09E"/>
</svg><div style="position:absolute;left:434px;top:104px;width:618px;height:1px;background:#A8A494"></div><div style="position:absolute;left:434px;top:104px;width:1px;height:567px;background:#A8A494"></div><div style="position:absolute;left:434px;top:671px;width:618px;height:1px;background:#FFFFFF"></div><div style="position:absolute;left:428px;top:105px;width:6px;height:1px;background:#000"></div><div class="t" style="left:361px;width:64px;text-align:right;top:99px;margin-left:0">170.00k</div><div style="position:absolute;left:428px;top:152px;width:6px;height:1px;background:#000"></div><div class="t" style="left:361px;width:64px;text-align:right;top:146px;margin-left:0">160.00k</div><div style="position:absolute;left:428px;top:199px;width:6px;height:1px;background:#000"></div><div class="t" style="left:361px;width:64px;text-align:right;top:193px;margin-left:0">150.00k</div><div style="position:absolute;left:428px;top:246px;width:6px;height:1px;background:#000"></div><div class="t" style="left:361px;width:64px;text-align:right;top:240px;margin-left:0">140.00k</div><div style="position:absolute;left:428px;top:293px;width:6px;height:1px;background:#000"></div><div class="t" style="left:361px;width:64px;text-align:right;top:287px;margin-left:0">130.00k</div><div style="position:absolute;left:428px;top:340px;width:6px;height:1px;background:#000"></div><div class="t" style="left:361px;width:64px;text-align:right;top:334px;margin-left:0">120.00k</div><div style="position:absolute;left:428px;top:388px;width:6px;height:1px;background:#000"></div><div class="t" style="left:361px;width:64px;text-align:right;top:382px;margin-left:0">110.00k</div><div style="position:absolute;left:428px;top:435px;width:6px;height:1px;background:#000"></div><div class="t" style="left:361px;width:64px;text-align:right;top:429px;margin-left:0">100.00k</div><div style="position:absolute;left:428px;top:482px;width:6px;height:1px;background:#000"></div><div class="t" style="left:361px;width:64px;text-align:right;top:476px;margin-left:0">90.00k</div><div style="position:absolute;left:428px;top:529px;width:6px;height:1px;background:#000"></div><div class="t" style="left:361px;width:64px;text-align:right;top:523px;margin-left:0">80.00k</div><div style="position:absolute;left:428px;top:576px;width:6px;height:1px;background:#000"></div><div class="t" style="left:361px;width:64px;text-align:right;top:570px;margin-left:0">70.00k</div><div style="position:absolute;left:428px;top:623px;width:6px;height:1px;background:#000"></div><div class="t" style="left:361px;width:64px;text-align:right;top:617px;margin-left:0">60.00k</div><div style="position:absolute;left:428px;top:670px;width:6px;height:1px;background:#000"></div><div class="t" style="left:361px;width:64px;text-align:right;top:664px;margin-left:0">50.00k</div><div style="position:absolute;left:435px;top:672px;width:1px;height:6px;background:#000"></div><div class="t" style="left:395px;width:80px;text-align:center;top:680px;margin-left:0">0.00</div><div style="position:absolute;left:558px;top:672px;width:1px;height:6px;background:#000"></div><div class="t" style="left:518px;width:80px;text-align:center;top:680px;margin-left:0">1.00m</div><div style="position:absolute;left:681px;top:672px;width:1px;height:6px;background:#000"></div><div class="t" style="left:641px;width:80px;text-align:center;top:680px;margin-left:0">2.00m</div><div style="position:absolute;left:804px;top:672px;width:1px;height:6px;background:#000"></div><div class="t" style="left:764px;width:80px;text-align:center;top:680px;margin-left:0">3.00m</div><div style="position:absolute;left:927px;top:672px;width:1px;height:6px;background:#000"></div><div class="t" style="left:887px;width:80px;text-align:center;top:680px;margin-left:0">4.00m</div><div style="position:absolute;left:1050px;top:672px;width:1px;height:6px;background:#000"></div><div class="t" style="left:1010px;width:80px;text-align:center;top:680px;margin-left:0">5.00m</div><div class="t" style="left:741px;top:693px;width:0"><div style="position:absolute;left:-30px;width:60px;text-align:center">Time [s]</div></div><div class="t" style="left:375px;top:391px;width:0;height:0"><div style="position:absolute;left:-40px;top:-6px;width:80px;text-align:center;transform:rotate(-90deg)">Frequency [Hz]</div></div><div style="position:absolute;left:14px;top:732px;width:1056px;height:170px;box-sizing:border-box;border:1px solid #D0D0BF;border-radius:4px"></div><div style="position:absolute;left:20px;top:728px;width:70px;height:8px;background:#ECE9D8"></div><div class="t" style="left:24px;top:727px;color:#2C5FD0">Edit Segment</div><div style="position:absolute;left:35px;top:745px;width:149px;height:136px;box-sizing:border-box;border:1px solid #ACA899;box-shadow:inset 1px 1px 0 #fff, 1px 1px 0 #fff"></div><div class="t" style="left:64px;top:753px;">Decimation Factor</div><svg width="190" height="889" style="position:absolute;left:0;top:0"><defs><radialGradient id="kg" cx="0.5" cy="0.5" r="0.5" fx="0.3" fy="0.3"><stop offset="0" stop-color="#FFFFFF"/><stop offset="0.3" stop-color="#FFFFFF"/><stop offset="0.55" stop-color="#EEEBDC"/><stop offset="0.85" stop-color="#C6C2B4"/><stop offset="1" stop-color="#9E9A8E"/></radialGradient><linearGradient id="rg" x1="0" y1="0" x2="1" y2="1"><stop offset="0" stop-color="#C8C5B6"/><stop offset="0.5" stop-color="#E8E6DA"/><stop offset="1" stop-color="#FFFFFF"/></linearGradient></defs><path d="M110.50 854.80 A31.5 31.5 0 0 1 103.15 853.93" stroke="#008000" stroke-width="5" fill="none"/><path d="M103.15 853.93 A31.5 31.5 0 0 1 85.02 841.82" stroke="#4AA41E" stroke-width="5" fill="none"/><path d="M85.02 841.82 A31.5 31.5 0 0 1 79.19 826.76" stroke="#7EBE22" stroke-width="5" fill="none"/><path d="M79.19 826.76 A31.5 31.5 0 0 1 79.10 820.83" stroke="#A8CC18" stroke-width="5" fill="none"/><path d="M79.10 820.83 A31.5 31.5 0 0 1 103.63 792.56" stroke="#E6E010" stroke-width="5" fill="none"/><path d="M103.63 792.56 A31.5 31.5 0 0 1 123.91 794.80" stroke="#E8A030" stroke-width="5" fill="none"/><path d="M123.91 794.80 A31.5 31.5 0 0 1 138.57 809.00" stroke="#F25A1C" stroke-width="5" fill="none"/><path d="M138.57 809.00 A31.5 31.5 0 0 1 142.00 823.30" stroke="#FF0000" stroke-width="5" fill="none"/><path d="M97.33 849.14 L95.06 853.59" stroke="#202020" stroke-width="1.2"/><path d="M87.04 840.35 L82.99 843.28" stroke="#202020" stroke-width="1.2"/><path d="M81.86 827.84 L76.92 828.62" stroke="#202020" stroke-width="1.2"/><path d="M82.92 814.34 L78.16 812.79" stroke="#202020" stroke-width="1.2"/><path d="M89.99 802.79 L86.46 799.26" stroke="#202020" stroke-width="1.2"/><path d="M101.54 795.72 L99.99 790.96" stroke="#202020" stroke-width="1.2"/><path d="M115.04 794.66 L115.82 789.72" stroke="#202020" stroke-width="1.2"/><path d="M127.55 799.84 L130.48 795.79" stroke="#202020" stroke-width="1.2"/><path d="M136.34 810.13 L140.79 807.86" stroke="#202020" stroke-width="1.2"/><path d="M110.5 852 v6" stroke="#202020" stroke-width="1.2"/><path d="M139 823.5 h5" stroke="#202020" stroke-width="1.2"/><circle cx="110.5" cy="823.3" r="29.2" fill="url(#rg)"/><circle cx="108.3" cy="820.8" r="26.3" fill="url(#kg)"/><path d="M110.7 827 L108.8 845.5" stroke="#808080" stroke-width="2.4"/></svg><div class="t" style="left:108px;top:862px;">0</div><div class="t" style="left:66px;top:845px;">20</div><div class="t" style="left:61px;top:803px;">40</div><div class="t" style="left:91px;top:774px;">60</div><div class="t" style="left:132px;top:779px;">80</div><div class="t" style="left:151px;top:817px;">100</div><div style="position:absolute;left:134px;top:857px;width:47px;height:20px;box-sizing:border-box;border:1px solid #7F9DB9;background:#fff"></div><div class="t" style="left:138px;top:860px;">2.00</div><div style="position:absolute;left:165px;top:859px;width:14px;height:16px;background:linear-gradient(#D6E2FC,#B4C8F6);border-radius:2px"></div><svg width="14" height="16" style="position:absolute;left:165px;top:859px"><path d="M3.5 6.5 L7 3 L10.5 6.5 M3.5 9.5 L7 13 L10.5 9.5" stroke="#56648A" stroke-width="1.8" fill="none"/></svg><div class="t" style="left:219px;top:748px;">Name</div><div style="position:absolute;left:282px;top:748px;width:116px;height:20px;box-sizing:border-box;border:1px solid #7F9DB9;background:#fff"></div><div class="t" style="left:286px;top:752px;">сегмент 3</div><div class="t" style="left:219px;top:772px;">Duration [s]</div><div style="position:absolute;left:282px;top:771px;width:116px;height:20px;box-sizing:border-box;border:1px solid #7F9DB9;background:#fff"></div><div class="t" style="left:285px;top:773px;">1.000000m</div><div style="position:absolute;left:382px;top:773px;width:14px;height:16px;background:linear-gradient(#D6E2FC,#B4C8F6);border-radius:2px"></div><svg width="14" height="16" style="position:absolute;left:382px;top:773px"><path d="M3.5 6.5 L7 3 L10.5 6.5 M3.5 9.5 L7 13 L10.5 9.5" stroke="#56648A" stroke-width="1.8" fill="none"/></svg><div class="t" style="left:219px;top:798px;">Type</div><div style="position:absolute;left:282px;top:797px;width:116px;height:21px;box-sizing:border-box;border:1px solid #7F9DB9;background:#fff"></div><div class="t" style="left:288px;top:801px;">Triangle</div><div style="position:absolute;left:381px;top:799px;width:15px;height:17px;background:linear-gradient(#D2DEFB,#B4C8F6);border-radius:2px"></div><svg width="12" height="8" style="position:absolute;left:383px;top:804px"><path d="M2 2 L6 6 L10 2" stroke="#4D6185" stroke-width="2" fill="none"/></svg><div class="t" style="left:219px;top:825px;">Cycles</div><div style="position:absolute;left:282px;top:824px;width:116px;height:20px;box-sizing:border-box;border:1px solid #7F9DB9;background:#fff"></div><div class="t" style="left:285px;top:826px;">1</div><div style="position:absolute;left:382px;top:826px;width:14px;height:16px;background:linear-gradient(#D6E2FC,#B4C8F6);border-radius:2px"></div><svg width="14" height="16" style="position:absolute;left:382px;top:826px"><path d="M3.5 6.5 L7 3 L10.5 6.5 M3.5 9.5 L7 13 L10.5 9.5" stroke="#56648A" stroke-width="1.8" fill="none"/></svg><div class="t" style="left:443px;top:745px;">Frequency [Hz]</div><div style="position:absolute;left:534px;top:744px;width:101px;height:20px;box-sizing:border-box;border:1px solid #7F9DB9;background:#fff"></div><div class="t" style="left:537px;top:746px;">70k</div><div style="position:absolute;left:619px;top:746px;width:14px;height:16px;background:linear-gradient(#D6E2FC,#B4C8F6);border-radius:2px"></div><svg width="14" height="16" style="position:absolute;left:619px;top:746px"><path d="M3.5 6.5 L7 3 L10.5 6.5 M3.5 9.5 L7 13 L10.5 9.5" stroke="#56648A" stroke-width="1.8" fill="none"/></svg><div class="t" style="left:443px;top:771px;">Phase [°]</div><div style="position:absolute;left:534px;top:770px;width:101px;height:20px;box-sizing:border-box;border:1px solid #7F9DB9;background:#fff"></div><div class="t" style="left:537px;top:772px;">0</div><div style="position:absolute;left:619px;top:772px;width:14px;height:16px;background:linear-gradient(#D6E2FC,#B4C8F6);border-radius:2px"></div><svg width="14" height="16" style="position:absolute;left:619px;top:772px"><path d="M3.5 6.5 L7 3 L10.5 6.5 M3.5 9.5 L7 13 L10.5 9.5" stroke="#56648A" stroke-width="1.8" fill="none"/></svg><div class="t" style="left:443px;top:797px;">Offset [Hz]</div><div style="position:absolute;left:534px;top:796px;width:101px;height:20px;box-sizing:border-box;border:1px solid #7F9DB9;background:#fff"></div><div class="t" style="left:537px;top:798px;">100k</div><div style="position:absolute;left:619px;top:798px;width:14px;height:16px;background:linear-gradient(#D6E2FC,#B4C8F6);border-radius:2px"></div><svg width="14" height="16" style="position:absolute;left:619px;top:798px"><path d="M3.5 6.5 L7 3 L10.5 6.5 M3.5 9.5 L7 13 L10.5 9.5" stroke="#56648A" stroke-width="1.8" fill="none"/></svg>
</body></html>
